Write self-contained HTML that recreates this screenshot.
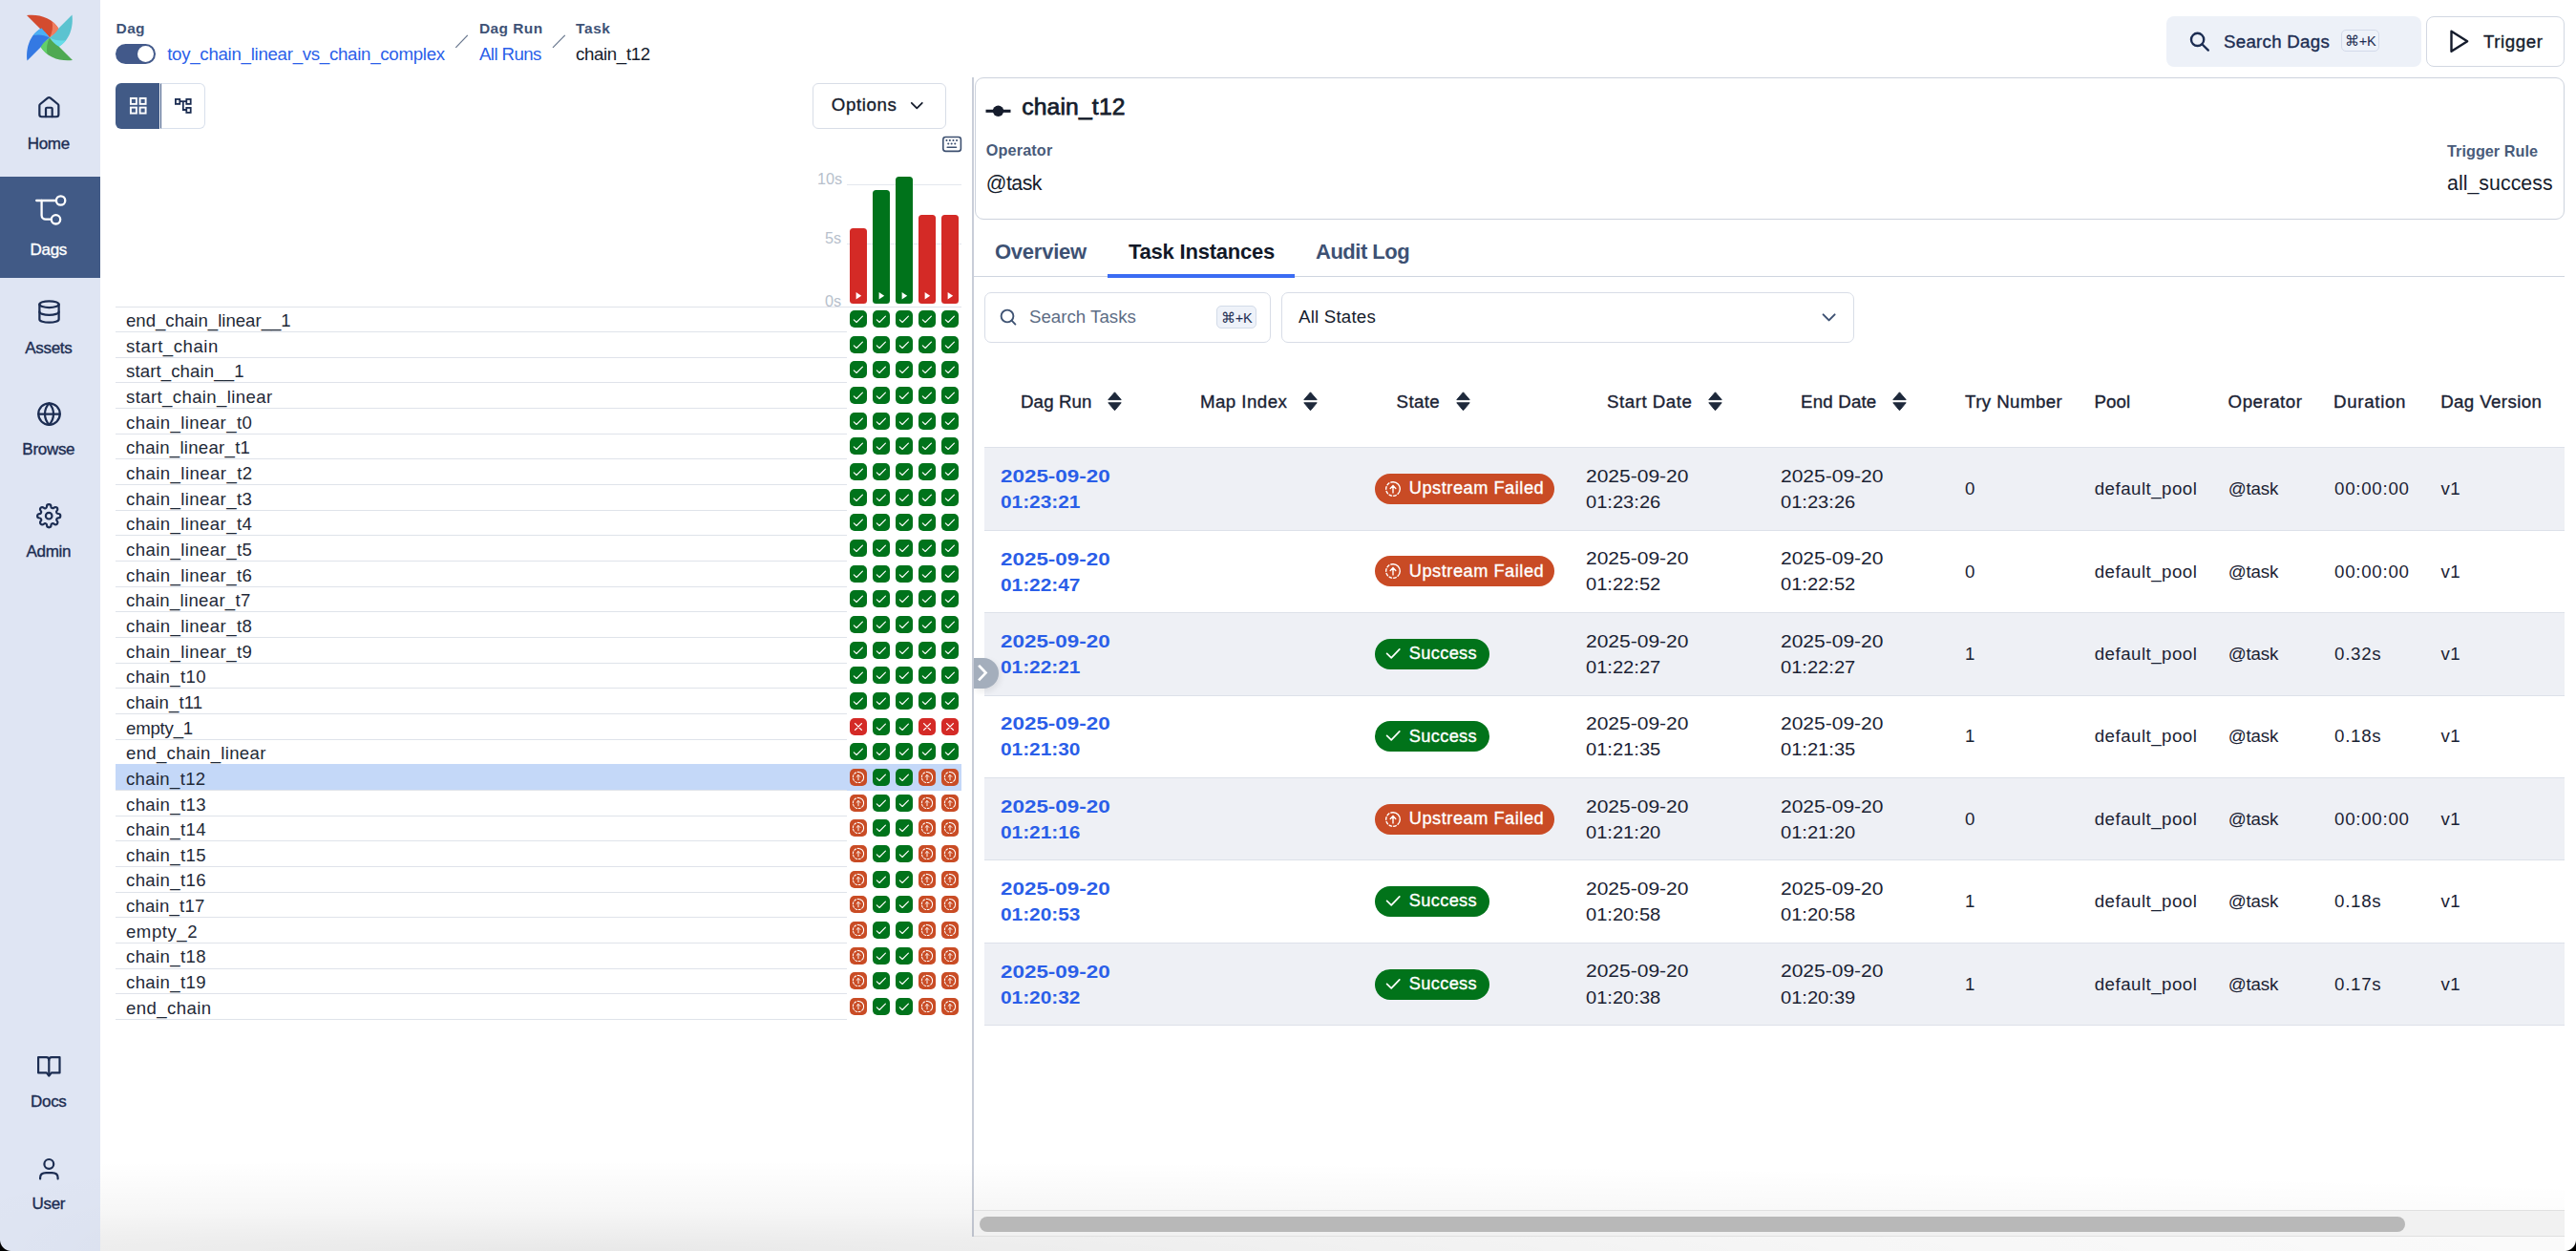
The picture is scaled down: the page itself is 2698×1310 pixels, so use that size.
<!DOCTYPE html>
<html><head><meta charset="utf-8"><style>
*{box-sizing:border-box;margin:0;padding:0}
html,body{width:2698px;height:1310px;overflow:hidden;background:#fff;font-family:"Liberation Sans",sans-serif;color:#101828}
.a{position:absolute}
.t{position:absolute;line-height:1;white-space:nowrap}
.m{-webkit-text-stroke:0.35px currentColor}
svg{position:absolute;overflow:visible}
</style></head><body>
<div class="a" style="left:0px;top:0px;width:105px;height:1310px;background:#dfe5f3"></div>
<svg style="left:22px;top:10px" width="60" height="60" viewBox="0 0 60 60"><g transform="rotate(0 30 29.5)"><path d="M6,6 C18,4.5 33,8 40,21 L30,29.5 Q25,22.5 20,20 Z" fill="#d34b2f"/><path d="M32.5,12.3 C36,15 38.5,18 40,21 L30,29.5 C33,24 33.6,18 32.5,12.3 Z" fill="#ef7d5f"/></g><g transform="rotate(90 30 29.5)"><path d="M6,6 C18,4.5 33,8 40,21 L30,29.5 Q25,22.5 20,20 Z" fill="#5bc3d0"/><path d="M32.5,12.3 C36,15 38.5,18 40,21 L30,29.5 C33,24 33.6,18 32.5,12.3 Z" fill="#66dde8"/></g><g transform="rotate(180 30 29.5)"><path d="M6,6 C18,4.5 33,8 40,21 L30,29.5 Q25,22.5 20,20 Z" fill="#4fa952"/><path d="M32.5,12.3 C36,15 38.5,18 40,21 L30,29.5 C33,24 33.6,18 32.5,12.3 Z" fill="#63d06a"/></g><g transform="rotate(270 30 29.5)"><path d="M6,6 C18,4.5 33,8 40,21 L30,29.5 Q25,22.5 20,20 Z" fill="#3479e3"/><path d="M32.5,12.3 C36,15 38.5,18 40,21 L30,29.5 C33,24 33.6,18 32.5,12.3 Z" fill="#4baff3"/></g></svg>
<svg style="left:38.2px;top:100.4px" width="26.7" height="25.4" viewBox="0 0 24 24" preserveAspectRatio="none" fill="none" stroke="#1c2d52" stroke-width="2" stroke-linecap="round" stroke-linejoin="round"><path d="M15 21v-8a1 1 0 0 0-1-1h-4a1 1 0 0 0-1 1v8"/><path d="M3 10a2 2 0 0 1 .709-1.528l7-5.999a2 2 0 0 1 2.582 0l7 5.999A2 2 0 0 1 21 10v9a2 2 0 0 1-2 2H5a2 2 0 0 1-2-2z"/></svg>
<div class="t m" style="left:-1.7px;width:105px;text-align:center;top:141.91px;font-size:17px;color:#1c2d52;letter-spacing:-0.3px">Home</div>
<div class="a" style="left:0px;top:185px;width:105px;height:106px;background:#415a86"></div>
<svg style="left:0;top:0" width="105" height="300" viewBox="0 0 105 300" fill="none" stroke="#fff" stroke-width="2.3" stroke-linecap="round"><path d="M38.2,210 H58.8"/><circle cx="63.6" cy="210" r="4.7"/><path d="M43.6,210 V225.5 a4.2,4.2 0 0 0 4.2,4.2 H53.8"/><circle cx="58.5" cy="229.8" r="4.7"/></svg>
<div class="t m" style="left:-1.7px;width:105px;text-align:center;top:253.41px;font-size:17px;color:#ffffff;letter-spacing:-0.3px">Dags</div>
<svg style="left:37.9px;top:312.6px" width="27" height="27" viewBox="0 0 24 24" fill="none" stroke="#1c2d52" stroke-width="2" stroke-linecap="round" stroke-linejoin="round"><ellipse cx="12" cy="5" rx="9" ry="3"/><path d="M3 5V19A9 3 0 0 0 21 19V5"/><path d="M3 12A9 3 0 0 0 21 12"/></svg>
<div class="t m" style="left:-1.7px;width:105px;text-align:center;top:355.61px;font-size:17px;color:#1c2d52;letter-spacing:-0.3px">Assets</div>
<svg style="left:37.8px;top:419.8px" width="27" height="27" viewBox="0 0 24 24" fill="none" stroke="#1c2d52" stroke-width="2" stroke-linecap="round" stroke-linejoin="round"><circle cx="12" cy="12" r="10"/><path d="M12 2a14.5 14.5 0 0 0 0 20 14.5 14.5 0 0 0 0-20"/><path d="M2 12h20"/></svg>
<div class="t m" style="left:-1.7px;width:105px;text-align:center;top:461.61px;font-size:17px;color:#1c2d52;letter-spacing:-0.3px">Browse</div>
<svg style="left:38.2px;top:527px" width="26.4" height="26.4" viewBox="0 0 24 24" fill="none" stroke="#1c2d52" stroke-width="2" stroke-linecap="round" stroke-linejoin="round"><circle cx="12" cy="12" r="3"/><path d="M19.4 15a1.65 1.65 0 0 0 .33 1.82l.06.06a2 2 0 0 1 0 2.83 2 2 0 0 1-2.83 0l-.06-.06a1.65 1.65 0 0 0-1.820-.33 1.65 1.65 0 0 0-1 1.51V21a2 2 0 0 1-2 2 2 2 0 0 1-2-2v-.09A1.65 1.65 0 0 0 9 19.4a1.650 1.65 0 0 0-1.82.33l-.06.06a2 2 0 0 1-2.83 0 2 2 0 0 1 0-2.83l.06-.06a1.65 1.65 0 0 0 .33-1.82 1.65 1.65 0 0 0-1.51-1H3a2 2 0 0 1-2-2 2 2 0 0 1 2-2h.09A1.65 1.65 0 0 0 4.6 9a1.65 1.65 0 0 0-.33-1.82l-.06-.06a2 2 0 0 1 0-2.83 2 2 0 0 1 2.83 0l.06.06a1.65 1.65 0 0 0 1.82.33H9a1.65 1.65 0 0 0 1-1.51V3a2 2 0 0 1 2-2 2 2 0 0 1 2 2v.09a1.65 1.65 0 0 0 1 1.51 1.65 1.65 0 0 0 1.82-.33l.06-.06a2 2 0 0 1 2.83 0 2 2 0 0 1 0 2.83l-.06.06a1.65 1.65 0 0 0-.33 1.82V9a1.65 1.65 0 0 0 1.51 1H21a2 2 0 0 1 2 2 2 2 0 0 1-2 2h-.09a1.65 1.65 0 0 0-1.51 1z"/></svg>
<div class="t m" style="left:-1.7px;width:105px;text-align:center;top:568.61px;font-size:17px;color:#1c2d52;letter-spacing:-0.3px">Admin</div>
<svg style="left:0;top:0" width="105" height="1310" viewBox="0 0 105 1310" fill="none" stroke="#1c2d52" stroke-width="2.2" stroke-linejoin="round" stroke-linecap="round"><path d="M51.3,1110 Q51.3,1107.1 54,1107.1 H62.5 V1123.4 H53.8 L51.3,1126.6 L48.8,1123.4 H40.1 V1107.1 H48.6 Q51.3,1107.1 51.3,1110 Z"/><path d="M51.3,1110 V1125.5"/><circle cx="51.3" cy="1218.9" r="4.9"/><path d="M42.1,1234.4 V1233.3 Q42.1,1228.1 48.2,1228.1 H54.5 Q60.6,1228.1 60.6,1233.3 V1234.4"/></svg>
<div class="t m" style="left:-1.7px;width:105px;text-align:center;top:1144.61px;font-size:17px;color:#1c2d52;letter-spacing:-0.3px">Docs</div>
<div class="t m" style="left:-1.7px;width:105px;text-align:center;top:1251.61px;font-size:17px;color:#1c2d52;letter-spacing:-0.3px">User</div>
<div class="t " style="left:121.60px;top:21.68px;font-size:15.5px;font-weight:700;color:#3e5276;letter-spacing:0.35px;">Dag</div>
<div class="a" style="left:121px;top:46px;width:42px;height:21px;background:#42598a;border-radius:11px"></div>
<div class="a" style="left:144px;top:48px;width:17px;height:17px;background:#fff;border-radius:50%"></div>
<div class="t " style="left:175.20px;top:48.47px;font-size:18.7px;font-weight:400;color:#2b5fe9;letter-spacing:-0.29px;">toy_chain_linear_vs_chain_complex</div>
<svg style="left:0;top:0" width="700" height="80" viewBox="0 0 700 80" stroke="#66758c" stroke-width="1.2"><path d="M477.3,49.8 L489.8,36.8"/><path d="M579,49.8 L591.8,36.8"/></svg>
<div class="t " style="left:502.00px;top:21.88px;font-size:15.5px;font-weight:700;color:#3e5276;letter-spacing:0.4px;">Dag Run</div>
<div class="t " style="left:502.00px;top:48.27px;font-size:18.7px;font-weight:400;color:#2b5fe9;letter-spacing:-0.6px;">All Runs</div>
<div class="t " style="left:603.00px;top:21.88px;font-size:15.5px;font-weight:700;color:#3e5276;letter-spacing:0.6px;">Task</div>
<div class="t " style="left:603.00px;top:48.27px;font-size:18.7px;font-weight:400;color:#151c2c;letter-spacing:-0.36px;">chain_t12</div>
<div class="a" style="left:2269px;top:17px;width:267px;height:53px;background:#edf1f8;border-radius:8px"></div>
<svg style="left:2292px;top:32px" width="24" height="24" viewBox="0 0 24 24" fill="none" stroke="#1c2d52" stroke-width="2.4" stroke-linecap="round"><circle cx="9.6" cy="9.4" r="6.6"/><path d="M14.6,14.5 L20.8,20.6"/></svg>
<div class="t m" style="left:2329.00px;top:34.87px;font-size:18.7px;font-weight:400;color:#1c2d52;letter-spacing:0.27px;">Search Dags</div>
<div class="a" style="left:2451.5px;top:31.3px;width:40.5px;height:23px;border:1px solid #d3daea;border-radius:5px;background:#eef2f9"></div>
<div class="t " style="left:2456.00px;top:36.23px;font-size:14.5px;font-weight:400;color:#1c2d52;letter-spacing:-0.2px;">&#8984;+K</div>
<div class="a" style="left:2541px;top:17px;width:145px;height:53px;border:1px solid #d2d8e2;border-radius:8px;background:#fff"></div>
<svg style="left:2560px;top:28px" width="32" height="32" viewBox="0 0 32 32" fill="none" stroke="#151c2c" stroke-width="2.4" stroke-linejoin="round"><path d="M7.5,4.8 L24.2,15.2 L7.5,25.8 Z"/></svg>
<div class="t m" style="left:2601.00px;top:34.87px;font-size:18.7px;font-weight:400;color:#151c2c;letter-spacing:0.58px;">Trigger</div>
<div class="a" style="left:121px;top:87px;width:46px;height:47.5px;background:#415a86;border-radius:6px 0 0 6px"></div>
<div class="a" style="left:168px;top:87px;width:46.7px;height:47.5px;border:1px solid #d9e0ec;border-left:1px solid #415a86;border-radius:0 6px 6px 0;background:#fff"></div>
<svg style="left:121px;top:87px" width="46" height="48" viewBox="0 0 46 48" fill="none" stroke="#fff" stroke-width="1.9"><rect x="15.9" y="15.9" width="6" height="6"/><rect x="25.6" y="15.9" width="6" height="6"/><rect x="15.9" y="25.6" width="6" height="6"/><rect x="25.6" y="25.6" width="6" height="6"/></svg>
<svg style="left:167px;top:87px" width="48" height="48" viewBox="0 0 48 48" fill="none" stroke="#1c2d52" stroke-width="1.8"><rect x="16.9" y="16.9" width="4.4" height="5"/><rect x="28.3" y="16.9" width="4.4" height="5"/><rect x="28.3" y="25.9" width="4.4" height="5"/><path d="M21.3,19.1 H28.3 M24.8,19.1 V28 H28.3"/></svg>
<div class="a" style="left:851px;top:87px;width:140px;height:47.6px;border:1px solid #d8dde7;border-radius:6px;background:#fff"></div>
<div class="t m" style="left:870.80px;top:101.07px;font-size:18.7px;font-weight:400;color:#151c2c;letter-spacing:0.6px;">Options</div>
<svg style="left:950px;top:100px" width="20" height="20" viewBox="0 0 20 20" fill="none" stroke="#151c2c" stroke-width="1.75" stroke-linecap="round" stroke-linejoin="round"><path d="M4.8,7.8 L10.3,13.3 L15.8,7.8"/></svg>
<svg style="left:980px;top:136px" width="32" height="28" viewBox="0 0 32 28" fill="none" stroke="#3d5070" stroke-width="1.6" stroke-linecap="round"><rect x="7.8" y="7.5" width="18.6" height="14.9" rx="2.6"/><path d="M11.4,11.1h.1 M14.8,11.1h.1 M18.4,11.1h.1 M22,11.1h.1 M13.2,14.5h.1 M16.6,14.5h.1 M20.2,14.5h.1" stroke-width="2"/><path d="M12.2,18.2 H21.5"/></svg>
<div class="t " style="left:856.00px;top:179.39px;font-size:16.2px;font-weight:400;color:#b7bfcc;letter-spacing:0px;">10s</div>
<div class="t " style="left:864.00px;top:240.59px;font-size:16.2px;font-weight:400;color:#b7bfcc;letter-spacing:0px;">5s</div>
<div class="t " style="left:864.00px;top:306.69px;font-size:16.2px;font-weight:400;color:#b7bfcc;letter-spacing:0px;">0s</div>
<div class="a" style="left:887px;top:193px;width:120px;height:1.2px;background:#e3e7ee"></div>
<div class="a" style="left:887px;top:255px;width:120px;height:1.2px;background:#e3e7ee"></div>
<div class="a" style="left:890px;top:239px;width:18px;height:79px;background:#d42a26;border-radius:3.5px"></div>
<svg style="left:890px;top:302px" width="18" height="16" viewBox="0 0 18 16" fill="#fff"><path d="M6.6,4 L12.2,7.8 L6.6,11.6 Z"/></svg>
<div class="a" style="left:914px;top:199px;width:18px;height:119px;background:#00731b;border-radius:3.5px"></div>
<svg style="left:914px;top:302px" width="18" height="16" viewBox="0 0 18 16" fill="#fff"><path d="M6.6,4 L12.2,7.8 L6.6,11.6 Z"/></svg>
<div class="a" style="left:938px;top:185px;width:18px;height:133px;background:#00731b;border-radius:3.5px"></div>
<svg style="left:938px;top:302px" width="18" height="16" viewBox="0 0 18 16" fill="#fff"><path d="M6.6,4 L12.2,7.8 L6.6,11.6 Z"/></svg>
<div class="a" style="left:962px;top:225px;width:18px;height:93px;background:#d42a26;border-radius:3.5px"></div>
<svg style="left:962px;top:302px" width="18" height="16" viewBox="0 0 18 16" fill="#fff"><path d="M6.6,4 L12.2,7.8 L6.6,11.6 Z"/></svg>
<div class="a" style="left:986px;top:225px;width:18px;height:93px;background:#d42a26;border-radius:3.5px"></div>
<svg style="left:986px;top:302px" width="18" height="16" viewBox="0 0 18 16" fill="#fff"><path d="M6.6,4 L12.2,7.8 L6.6,11.6 Z"/></svg>
<div class="a" style="left:121px;top:321px;width:886px;height:1px;background:#dfe3ea"></div>
<div class="a" style="left:121px;top:347px;width:766px;height:1px;background:#dfe3ea"></div>
<div class="t " style="left:132.00px;top:326.96px;font-size:18.6px;font-weight:400;color:#1f2937;letter-spacing:0.0px;">end_chain_linear__1</div>
<div class="a" style="left:890px;top:325.10px;width:18px;height:18px;border-radius:5px;background:#00731b"></div><svg style="left:890px;top:325.10px" width="18" height="18" viewBox="0 0 18 18" fill="none" stroke="#fff" stroke-width="1.15" stroke-linecap="round" stroke-linejoin="round"><path d="M4.3,9.9 L7.1,12.5 L13.4,6.1"/></svg>
<div class="a" style="left:914px;top:325.10px;width:18px;height:18px;border-radius:5px;background:#00731b"></div><svg style="left:914px;top:325.10px" width="18" height="18" viewBox="0 0 18 18" fill="none" stroke="#fff" stroke-width="1.15" stroke-linecap="round" stroke-linejoin="round"><path d="M4.3,9.9 L7.1,12.5 L13.4,6.1"/></svg>
<div class="a" style="left:938px;top:325.10px;width:18px;height:18px;border-radius:5px;background:#00731b"></div><svg style="left:938px;top:325.10px" width="18" height="18" viewBox="0 0 18 18" fill="none" stroke="#fff" stroke-width="1.15" stroke-linecap="round" stroke-linejoin="round"><path d="M4.3,9.9 L7.1,12.5 L13.4,6.1"/></svg>
<div class="a" style="left:962px;top:325.10px;width:18px;height:18px;border-radius:5px;background:#00731b"></div><svg style="left:962px;top:325.10px" width="18" height="18" viewBox="0 0 18 18" fill="none" stroke="#fff" stroke-width="1.15" stroke-linecap="round" stroke-linejoin="round"><path d="M4.3,9.9 L7.1,12.5 L13.4,6.1"/></svg>
<div class="a" style="left:986px;top:325.10px;width:18px;height:18px;border-radius:5px;background:#00731b"></div><svg style="left:986px;top:325.10px" width="18" height="18" viewBox="0 0 18 18" fill="none" stroke="#fff" stroke-width="1.15" stroke-linecap="round" stroke-linejoin="round"><path d="M4.3,9.9 L7.1,12.5 L13.4,6.1"/></svg>
<div class="a" style="left:121px;top:374px;width:766px;height:1px;background:#dfe3ea"></div>
<div class="t " style="left:132.00px;top:353.62px;font-size:18.6px;font-weight:400;color:#1f2937;letter-spacing:0.54px;">start_chain</div>
<div class="a" style="left:890px;top:351.76px;width:18px;height:18px;border-radius:5px;background:#00731b"></div><svg style="left:890px;top:351.76px" width="18" height="18" viewBox="0 0 18 18" fill="none" stroke="#fff" stroke-width="1.15" stroke-linecap="round" stroke-linejoin="round"><path d="M4.3,9.9 L7.1,12.5 L13.4,6.1"/></svg>
<div class="a" style="left:914px;top:351.76px;width:18px;height:18px;border-radius:5px;background:#00731b"></div><svg style="left:914px;top:351.76px" width="18" height="18" viewBox="0 0 18 18" fill="none" stroke="#fff" stroke-width="1.15" stroke-linecap="round" stroke-linejoin="round"><path d="M4.3,9.9 L7.1,12.5 L13.4,6.1"/></svg>
<div class="a" style="left:938px;top:351.76px;width:18px;height:18px;border-radius:5px;background:#00731b"></div><svg style="left:938px;top:351.76px" width="18" height="18" viewBox="0 0 18 18" fill="none" stroke="#fff" stroke-width="1.15" stroke-linecap="round" stroke-linejoin="round"><path d="M4.3,9.9 L7.1,12.5 L13.4,6.1"/></svg>
<div class="a" style="left:962px;top:351.76px;width:18px;height:18px;border-radius:5px;background:#00731b"></div><svg style="left:962px;top:351.76px" width="18" height="18" viewBox="0 0 18 18" fill="none" stroke="#fff" stroke-width="1.15" stroke-linecap="round" stroke-linejoin="round"><path d="M4.3,9.9 L7.1,12.5 L13.4,6.1"/></svg>
<div class="a" style="left:986px;top:351.76px;width:18px;height:18px;border-radius:5px;background:#00731b"></div><svg style="left:986px;top:351.76px" width="18" height="18" viewBox="0 0 18 18" fill="none" stroke="#fff" stroke-width="1.15" stroke-linecap="round" stroke-linejoin="round"><path d="M4.3,9.9 L7.1,12.5 L13.4,6.1"/></svg>
<div class="a" style="left:121px;top:400px;width:766px;height:1px;background:#dfe3ea"></div>
<div class="t " style="left:132.00px;top:380.28px;font-size:18.6px;font-weight:400;color:#1f2937;letter-spacing:0.115px;">start_chain__1</div>
<div class="a" style="left:890px;top:378.42px;width:18px;height:18px;border-radius:5px;background:#00731b"></div><svg style="left:890px;top:378.42px" width="18" height="18" viewBox="0 0 18 18" fill="none" stroke="#fff" stroke-width="1.15" stroke-linecap="round" stroke-linejoin="round"><path d="M4.3,9.9 L7.1,12.5 L13.4,6.1"/></svg>
<div class="a" style="left:914px;top:378.42px;width:18px;height:18px;border-radius:5px;background:#00731b"></div><svg style="left:914px;top:378.42px" width="18" height="18" viewBox="0 0 18 18" fill="none" stroke="#fff" stroke-width="1.15" stroke-linecap="round" stroke-linejoin="round"><path d="M4.3,9.9 L7.1,12.5 L13.4,6.1"/></svg>
<div class="a" style="left:938px;top:378.42px;width:18px;height:18px;border-radius:5px;background:#00731b"></div><svg style="left:938px;top:378.42px" width="18" height="18" viewBox="0 0 18 18" fill="none" stroke="#fff" stroke-width="1.15" stroke-linecap="round" stroke-linejoin="round"><path d="M4.3,9.9 L7.1,12.5 L13.4,6.1"/></svg>
<div class="a" style="left:962px;top:378.42px;width:18px;height:18px;border-radius:5px;background:#00731b"></div><svg style="left:962px;top:378.42px" width="18" height="18" viewBox="0 0 18 18" fill="none" stroke="#fff" stroke-width="1.15" stroke-linecap="round" stroke-linejoin="round"><path d="M4.3,9.9 L7.1,12.5 L13.4,6.1"/></svg>
<div class="a" style="left:986px;top:378.42px;width:18px;height:18px;border-radius:5px;background:#00731b"></div><svg style="left:986px;top:378.42px" width="18" height="18" viewBox="0 0 18 18" fill="none" stroke="#fff" stroke-width="1.15" stroke-linecap="round" stroke-linejoin="round"><path d="M4.3,9.9 L7.1,12.5 L13.4,6.1"/></svg>
<div class="a" style="left:121px;top:427px;width:766px;height:1px;background:#dfe3ea"></div>
<div class="t " style="left:132.00px;top:406.94px;font-size:18.6px;font-weight:400;color:#1f2937;letter-spacing:0.376px;">start_chain_linear</div>
<div class="a" style="left:890px;top:405.08px;width:18px;height:18px;border-radius:5px;background:#00731b"></div><svg style="left:890px;top:405.08px" width="18" height="18" viewBox="0 0 18 18" fill="none" stroke="#fff" stroke-width="1.15" stroke-linecap="round" stroke-linejoin="round"><path d="M4.3,9.9 L7.1,12.5 L13.4,6.1"/></svg>
<div class="a" style="left:914px;top:405.08px;width:18px;height:18px;border-radius:5px;background:#00731b"></div><svg style="left:914px;top:405.08px" width="18" height="18" viewBox="0 0 18 18" fill="none" stroke="#fff" stroke-width="1.15" stroke-linecap="round" stroke-linejoin="round"><path d="M4.3,9.9 L7.1,12.5 L13.4,6.1"/></svg>
<div class="a" style="left:938px;top:405.08px;width:18px;height:18px;border-radius:5px;background:#00731b"></div><svg style="left:938px;top:405.08px" width="18" height="18" viewBox="0 0 18 18" fill="none" stroke="#fff" stroke-width="1.15" stroke-linecap="round" stroke-linejoin="round"><path d="M4.3,9.9 L7.1,12.5 L13.4,6.1"/></svg>
<div class="a" style="left:962px;top:405.08px;width:18px;height:18px;border-radius:5px;background:#00731b"></div><svg style="left:962px;top:405.08px" width="18" height="18" viewBox="0 0 18 18" fill="none" stroke="#fff" stroke-width="1.15" stroke-linecap="round" stroke-linejoin="round"><path d="M4.3,9.9 L7.1,12.5 L13.4,6.1"/></svg>
<div class="a" style="left:986px;top:405.08px;width:18px;height:18px;border-radius:5px;background:#00731b"></div><svg style="left:986px;top:405.08px" width="18" height="18" viewBox="0 0 18 18" fill="none" stroke="#fff" stroke-width="1.15" stroke-linecap="round" stroke-linejoin="round"><path d="M4.3,9.9 L7.1,12.5 L13.4,6.1"/></svg>
<div class="a" style="left:121px;top:454px;width:766px;height:1px;background:#dfe3ea"></div>
<div class="t " style="left:132.00px;top:433.60px;font-size:18.6px;font-weight:400;color:#1f2937;letter-spacing:0.407px;">chain_linear_t0</div>
<div class="a" style="left:890px;top:431.74px;width:18px;height:18px;border-radius:5px;background:#00731b"></div><svg style="left:890px;top:431.74px" width="18" height="18" viewBox="0 0 18 18" fill="none" stroke="#fff" stroke-width="1.15" stroke-linecap="round" stroke-linejoin="round"><path d="M4.3,9.9 L7.1,12.5 L13.4,6.1"/></svg>
<div class="a" style="left:914px;top:431.74px;width:18px;height:18px;border-radius:5px;background:#00731b"></div><svg style="left:914px;top:431.74px" width="18" height="18" viewBox="0 0 18 18" fill="none" stroke="#fff" stroke-width="1.15" stroke-linecap="round" stroke-linejoin="round"><path d="M4.3,9.9 L7.1,12.5 L13.4,6.1"/></svg>
<div class="a" style="left:938px;top:431.74px;width:18px;height:18px;border-radius:5px;background:#00731b"></div><svg style="left:938px;top:431.74px" width="18" height="18" viewBox="0 0 18 18" fill="none" stroke="#fff" stroke-width="1.15" stroke-linecap="round" stroke-linejoin="round"><path d="M4.3,9.9 L7.1,12.5 L13.4,6.1"/></svg>
<div class="a" style="left:962px;top:431.74px;width:18px;height:18px;border-radius:5px;background:#00731b"></div><svg style="left:962px;top:431.74px" width="18" height="18" viewBox="0 0 18 18" fill="none" stroke="#fff" stroke-width="1.15" stroke-linecap="round" stroke-linejoin="round"><path d="M4.3,9.9 L7.1,12.5 L13.4,6.1"/></svg>
<div class="a" style="left:986px;top:431.74px;width:18px;height:18px;border-radius:5px;background:#00731b"></div><svg style="left:986px;top:431.74px" width="18" height="18" viewBox="0 0 18 18" fill="none" stroke="#fff" stroke-width="1.15" stroke-linecap="round" stroke-linejoin="round"><path d="M4.3,9.9 L7.1,12.5 L13.4,6.1"/></svg>
<div class="a" style="left:121px;top:480px;width:766px;height:1px;background:#dfe3ea"></div>
<div class="t " style="left:132.00px;top:460.26px;font-size:18.6px;font-weight:400;color:#1f2937;letter-spacing:0.271px;">chain_linear_t1</div>
<div class="a" style="left:890px;top:458.40px;width:18px;height:18px;border-radius:5px;background:#00731b"></div><svg style="left:890px;top:458.40px" width="18" height="18" viewBox="0 0 18 18" fill="none" stroke="#fff" stroke-width="1.15" stroke-linecap="round" stroke-linejoin="round"><path d="M4.3,9.9 L7.1,12.5 L13.4,6.1"/></svg>
<div class="a" style="left:914px;top:458.40px;width:18px;height:18px;border-radius:5px;background:#00731b"></div><svg style="left:914px;top:458.40px" width="18" height="18" viewBox="0 0 18 18" fill="none" stroke="#fff" stroke-width="1.15" stroke-linecap="round" stroke-linejoin="round"><path d="M4.3,9.9 L7.1,12.5 L13.4,6.1"/></svg>
<div class="a" style="left:938px;top:458.40px;width:18px;height:18px;border-radius:5px;background:#00731b"></div><svg style="left:938px;top:458.40px" width="18" height="18" viewBox="0 0 18 18" fill="none" stroke="#fff" stroke-width="1.15" stroke-linecap="round" stroke-linejoin="round"><path d="M4.3,9.9 L7.1,12.5 L13.4,6.1"/></svg>
<div class="a" style="left:962px;top:458.40px;width:18px;height:18px;border-radius:5px;background:#00731b"></div><svg style="left:962px;top:458.40px" width="18" height="18" viewBox="0 0 18 18" fill="none" stroke="#fff" stroke-width="1.15" stroke-linecap="round" stroke-linejoin="round"><path d="M4.3,9.9 L7.1,12.5 L13.4,6.1"/></svg>
<div class="a" style="left:986px;top:458.40px;width:18px;height:18px;border-radius:5px;background:#00731b"></div><svg style="left:986px;top:458.40px" width="18" height="18" viewBox="0 0 18 18" fill="none" stroke="#fff" stroke-width="1.15" stroke-linecap="round" stroke-linejoin="round"><path d="M4.3,9.9 L7.1,12.5 L13.4,6.1"/></svg>
<div class="a" style="left:121px;top:507px;width:766px;height:1px;background:#dfe3ea"></div>
<div class="t " style="left:132.00px;top:486.92px;font-size:18.6px;font-weight:400;color:#1f2937;letter-spacing:0.429px;">chain_linear_t2</div>
<div class="a" style="left:890px;top:485.06px;width:18px;height:18px;border-radius:5px;background:#00731b"></div><svg style="left:890px;top:485.06px" width="18" height="18" viewBox="0 0 18 18" fill="none" stroke="#fff" stroke-width="1.15" stroke-linecap="round" stroke-linejoin="round"><path d="M4.3,9.9 L7.1,12.5 L13.4,6.1"/></svg>
<div class="a" style="left:914px;top:485.06px;width:18px;height:18px;border-radius:5px;background:#00731b"></div><svg style="left:914px;top:485.06px" width="18" height="18" viewBox="0 0 18 18" fill="none" stroke="#fff" stroke-width="1.15" stroke-linecap="round" stroke-linejoin="round"><path d="M4.3,9.9 L7.1,12.5 L13.4,6.1"/></svg>
<div class="a" style="left:938px;top:485.06px;width:18px;height:18px;border-radius:5px;background:#00731b"></div><svg style="left:938px;top:485.06px" width="18" height="18" viewBox="0 0 18 18" fill="none" stroke="#fff" stroke-width="1.15" stroke-linecap="round" stroke-linejoin="round"><path d="M4.3,9.9 L7.1,12.5 L13.4,6.1"/></svg>
<div class="a" style="left:962px;top:485.06px;width:18px;height:18px;border-radius:5px;background:#00731b"></div><svg style="left:962px;top:485.06px" width="18" height="18" viewBox="0 0 18 18" fill="none" stroke="#fff" stroke-width="1.15" stroke-linecap="round" stroke-linejoin="round"><path d="M4.3,9.9 L7.1,12.5 L13.4,6.1"/></svg>
<div class="a" style="left:986px;top:485.06px;width:18px;height:18px;border-radius:5px;background:#00731b"></div><svg style="left:986px;top:485.06px" width="18" height="18" viewBox="0 0 18 18" fill="none" stroke="#fff" stroke-width="1.15" stroke-linecap="round" stroke-linejoin="round"><path d="M4.3,9.9 L7.1,12.5 L13.4,6.1"/></svg>
<div class="a" style="left:121px;top:534px;width:766px;height:1px;background:#dfe3ea"></div>
<div class="t " style="left:132.00px;top:513.58px;font-size:18.6px;font-weight:400;color:#1f2937;letter-spacing:0.41px;">chain_linear_t3</div>
<div class="a" style="left:890px;top:511.72px;width:18px;height:18px;border-radius:5px;background:#00731b"></div><svg style="left:890px;top:511.72px" width="18" height="18" viewBox="0 0 18 18" fill="none" stroke="#fff" stroke-width="1.15" stroke-linecap="round" stroke-linejoin="round"><path d="M4.3,9.9 L7.1,12.5 L13.4,6.1"/></svg>
<div class="a" style="left:914px;top:511.72px;width:18px;height:18px;border-radius:5px;background:#00731b"></div><svg style="left:914px;top:511.72px" width="18" height="18" viewBox="0 0 18 18" fill="none" stroke="#fff" stroke-width="1.15" stroke-linecap="round" stroke-linejoin="round"><path d="M4.3,9.9 L7.1,12.5 L13.4,6.1"/></svg>
<div class="a" style="left:938px;top:511.72px;width:18px;height:18px;border-radius:5px;background:#00731b"></div><svg style="left:938px;top:511.72px" width="18" height="18" viewBox="0 0 18 18" fill="none" stroke="#fff" stroke-width="1.15" stroke-linecap="round" stroke-linejoin="round"><path d="M4.3,9.9 L7.1,12.5 L13.4,6.1"/></svg>
<div class="a" style="left:962px;top:511.72px;width:18px;height:18px;border-radius:5px;background:#00731b"></div><svg style="left:962px;top:511.72px" width="18" height="18" viewBox="0 0 18 18" fill="none" stroke="#fff" stroke-width="1.15" stroke-linecap="round" stroke-linejoin="round"><path d="M4.3,9.9 L7.1,12.5 L13.4,6.1"/></svg>
<div class="a" style="left:986px;top:511.72px;width:18px;height:18px;border-radius:5px;background:#00731b"></div><svg style="left:986px;top:511.72px" width="18" height="18" viewBox="0 0 18 18" fill="none" stroke="#fff" stroke-width="1.15" stroke-linecap="round" stroke-linejoin="round"><path d="M4.3,9.9 L7.1,12.5 L13.4,6.1"/></svg>
<div class="a" style="left:121px;top:560px;width:766px;height:1px;background:#dfe3ea"></div>
<div class="t " style="left:132.00px;top:540.24px;font-size:18.6px;font-weight:400;color:#1f2937;letter-spacing:0.41px;">chain_linear_t4</div>
<div class="a" style="left:890px;top:538.38px;width:18px;height:18px;border-radius:5px;background:#00731b"></div><svg style="left:890px;top:538.38px" width="18" height="18" viewBox="0 0 18 18" fill="none" stroke="#fff" stroke-width="1.15" stroke-linecap="round" stroke-linejoin="round"><path d="M4.3,9.9 L7.1,12.5 L13.4,6.1"/></svg>
<div class="a" style="left:914px;top:538.38px;width:18px;height:18px;border-radius:5px;background:#00731b"></div><svg style="left:914px;top:538.38px" width="18" height="18" viewBox="0 0 18 18" fill="none" stroke="#fff" stroke-width="1.15" stroke-linecap="round" stroke-linejoin="round"><path d="M4.3,9.9 L7.1,12.5 L13.4,6.1"/></svg>
<div class="a" style="left:938px;top:538.38px;width:18px;height:18px;border-radius:5px;background:#00731b"></div><svg style="left:938px;top:538.38px" width="18" height="18" viewBox="0 0 18 18" fill="none" stroke="#fff" stroke-width="1.15" stroke-linecap="round" stroke-linejoin="round"><path d="M4.3,9.9 L7.1,12.5 L13.4,6.1"/></svg>
<div class="a" style="left:962px;top:538.38px;width:18px;height:18px;border-radius:5px;background:#00731b"></div><svg style="left:962px;top:538.38px" width="18" height="18" viewBox="0 0 18 18" fill="none" stroke="#fff" stroke-width="1.15" stroke-linecap="round" stroke-linejoin="round"><path d="M4.3,9.9 L7.1,12.5 L13.4,6.1"/></svg>
<div class="a" style="left:986px;top:538.38px;width:18px;height:18px;border-radius:5px;background:#00731b"></div><svg style="left:986px;top:538.38px" width="18" height="18" viewBox="0 0 18 18" fill="none" stroke="#fff" stroke-width="1.15" stroke-linecap="round" stroke-linejoin="round"><path d="M4.3,9.9 L7.1,12.5 L13.4,6.1"/></svg>
<div class="a" style="left:121px;top:587px;width:766px;height:1px;background:#dfe3ea"></div>
<div class="t " style="left:132.00px;top:566.90px;font-size:18.6px;font-weight:400;color:#1f2937;letter-spacing:0.41px;">chain_linear_t5</div>
<div class="a" style="left:890px;top:565.04px;width:18px;height:18px;border-radius:5px;background:#00731b"></div><svg style="left:890px;top:565.04px" width="18" height="18" viewBox="0 0 18 18" fill="none" stroke="#fff" stroke-width="1.15" stroke-linecap="round" stroke-linejoin="round"><path d="M4.3,9.9 L7.1,12.5 L13.4,6.1"/></svg>
<div class="a" style="left:914px;top:565.04px;width:18px;height:18px;border-radius:5px;background:#00731b"></div><svg style="left:914px;top:565.04px" width="18" height="18" viewBox="0 0 18 18" fill="none" stroke="#fff" stroke-width="1.15" stroke-linecap="round" stroke-linejoin="round"><path d="M4.3,9.9 L7.1,12.5 L13.4,6.1"/></svg>
<div class="a" style="left:938px;top:565.04px;width:18px;height:18px;border-radius:5px;background:#00731b"></div><svg style="left:938px;top:565.04px" width="18" height="18" viewBox="0 0 18 18" fill="none" stroke="#fff" stroke-width="1.15" stroke-linecap="round" stroke-linejoin="round"><path d="M4.3,9.9 L7.1,12.5 L13.4,6.1"/></svg>
<div class="a" style="left:962px;top:565.04px;width:18px;height:18px;border-radius:5px;background:#00731b"></div><svg style="left:962px;top:565.04px" width="18" height="18" viewBox="0 0 18 18" fill="none" stroke="#fff" stroke-width="1.15" stroke-linecap="round" stroke-linejoin="round"><path d="M4.3,9.9 L7.1,12.5 L13.4,6.1"/></svg>
<div class="a" style="left:986px;top:565.04px;width:18px;height:18px;border-radius:5px;background:#00731b"></div><svg style="left:986px;top:565.04px" width="18" height="18" viewBox="0 0 18 18" fill="none" stroke="#fff" stroke-width="1.15" stroke-linecap="round" stroke-linejoin="round"><path d="M4.3,9.9 L7.1,12.5 L13.4,6.1"/></svg>
<div class="a" style="left:121px;top:614px;width:766px;height:1px;background:#dfe3ea"></div>
<div class="t " style="left:132.00px;top:593.56px;font-size:18.6px;font-weight:400;color:#1f2937;letter-spacing:0.41px;">chain_linear_t6</div>
<div class="a" style="left:890px;top:591.70px;width:18px;height:18px;border-radius:5px;background:#00731b"></div><svg style="left:890px;top:591.70px" width="18" height="18" viewBox="0 0 18 18" fill="none" stroke="#fff" stroke-width="1.15" stroke-linecap="round" stroke-linejoin="round"><path d="M4.3,9.9 L7.1,12.5 L13.4,6.1"/></svg>
<div class="a" style="left:914px;top:591.70px;width:18px;height:18px;border-radius:5px;background:#00731b"></div><svg style="left:914px;top:591.70px" width="18" height="18" viewBox="0 0 18 18" fill="none" stroke="#fff" stroke-width="1.15" stroke-linecap="round" stroke-linejoin="round"><path d="M4.3,9.9 L7.1,12.5 L13.4,6.1"/></svg>
<div class="a" style="left:938px;top:591.70px;width:18px;height:18px;border-radius:5px;background:#00731b"></div><svg style="left:938px;top:591.70px" width="18" height="18" viewBox="0 0 18 18" fill="none" stroke="#fff" stroke-width="1.15" stroke-linecap="round" stroke-linejoin="round"><path d="M4.3,9.9 L7.1,12.5 L13.4,6.1"/></svg>
<div class="a" style="left:962px;top:591.70px;width:18px;height:18px;border-radius:5px;background:#00731b"></div><svg style="left:962px;top:591.70px" width="18" height="18" viewBox="0 0 18 18" fill="none" stroke="#fff" stroke-width="1.15" stroke-linecap="round" stroke-linejoin="round"><path d="M4.3,9.9 L7.1,12.5 L13.4,6.1"/></svg>
<div class="a" style="left:986px;top:591.70px;width:18px;height:18px;border-radius:5px;background:#00731b"></div><svg style="left:986px;top:591.70px" width="18" height="18" viewBox="0 0 18 18" fill="none" stroke="#fff" stroke-width="1.15" stroke-linecap="round" stroke-linejoin="round"><path d="M4.3,9.9 L7.1,12.5 L13.4,6.1"/></svg>
<div class="a" style="left:121px;top:640px;width:766px;height:1px;background:#dfe3ea"></div>
<div class="t " style="left:132.00px;top:620.22px;font-size:18.6px;font-weight:400;color:#1f2937;letter-spacing:0.3px;">chain_linear_t7</div>
<div class="a" style="left:890px;top:618.36px;width:18px;height:18px;border-radius:5px;background:#00731b"></div><svg style="left:890px;top:618.36px" width="18" height="18" viewBox="0 0 18 18" fill="none" stroke="#fff" stroke-width="1.15" stroke-linecap="round" stroke-linejoin="round"><path d="M4.3,9.9 L7.1,12.5 L13.4,6.1"/></svg>
<div class="a" style="left:914px;top:618.36px;width:18px;height:18px;border-radius:5px;background:#00731b"></div><svg style="left:914px;top:618.36px" width="18" height="18" viewBox="0 0 18 18" fill="none" stroke="#fff" stroke-width="1.15" stroke-linecap="round" stroke-linejoin="round"><path d="M4.3,9.9 L7.1,12.5 L13.4,6.1"/></svg>
<div class="a" style="left:938px;top:618.36px;width:18px;height:18px;border-radius:5px;background:#00731b"></div><svg style="left:938px;top:618.36px" width="18" height="18" viewBox="0 0 18 18" fill="none" stroke="#fff" stroke-width="1.15" stroke-linecap="round" stroke-linejoin="round"><path d="M4.3,9.9 L7.1,12.5 L13.4,6.1"/></svg>
<div class="a" style="left:962px;top:618.36px;width:18px;height:18px;border-radius:5px;background:#00731b"></div><svg style="left:962px;top:618.36px" width="18" height="18" viewBox="0 0 18 18" fill="none" stroke="#fff" stroke-width="1.15" stroke-linecap="round" stroke-linejoin="round"><path d="M4.3,9.9 L7.1,12.5 L13.4,6.1"/></svg>
<div class="a" style="left:986px;top:618.36px;width:18px;height:18px;border-radius:5px;background:#00731b"></div><svg style="left:986px;top:618.36px" width="18" height="18" viewBox="0 0 18 18" fill="none" stroke="#fff" stroke-width="1.15" stroke-linecap="round" stroke-linejoin="round"><path d="M4.3,9.9 L7.1,12.5 L13.4,6.1"/></svg>
<div class="a" style="left:121px;top:667px;width:766px;height:1px;background:#dfe3ea"></div>
<div class="t " style="left:132.00px;top:646.88px;font-size:18.6px;font-weight:400;color:#1f2937;letter-spacing:0.41px;">chain_linear_t8</div>
<div class="a" style="left:890px;top:645.02px;width:18px;height:18px;border-radius:5px;background:#00731b"></div><svg style="left:890px;top:645.02px" width="18" height="18" viewBox="0 0 18 18" fill="none" stroke="#fff" stroke-width="1.15" stroke-linecap="round" stroke-linejoin="round"><path d="M4.3,9.9 L7.1,12.5 L13.4,6.1"/></svg>
<div class="a" style="left:914px;top:645.02px;width:18px;height:18px;border-radius:5px;background:#00731b"></div><svg style="left:914px;top:645.02px" width="18" height="18" viewBox="0 0 18 18" fill="none" stroke="#fff" stroke-width="1.15" stroke-linecap="round" stroke-linejoin="round"><path d="M4.3,9.9 L7.1,12.5 L13.4,6.1"/></svg>
<div class="a" style="left:938px;top:645.02px;width:18px;height:18px;border-radius:5px;background:#00731b"></div><svg style="left:938px;top:645.02px" width="18" height="18" viewBox="0 0 18 18" fill="none" stroke="#fff" stroke-width="1.15" stroke-linecap="round" stroke-linejoin="round"><path d="M4.3,9.9 L7.1,12.5 L13.4,6.1"/></svg>
<div class="a" style="left:962px;top:645.02px;width:18px;height:18px;border-radius:5px;background:#00731b"></div><svg style="left:962px;top:645.02px" width="18" height="18" viewBox="0 0 18 18" fill="none" stroke="#fff" stroke-width="1.15" stroke-linecap="round" stroke-linejoin="round"><path d="M4.3,9.9 L7.1,12.5 L13.4,6.1"/></svg>
<div class="a" style="left:986px;top:645.02px;width:18px;height:18px;border-radius:5px;background:#00731b"></div><svg style="left:986px;top:645.02px" width="18" height="18" viewBox="0 0 18 18" fill="none" stroke="#fff" stroke-width="1.15" stroke-linecap="round" stroke-linejoin="round"><path d="M4.3,9.9 L7.1,12.5 L13.4,6.1"/></svg>
<div class="a" style="left:121px;top:694px;width:766px;height:1px;background:#dfe3ea"></div>
<div class="t " style="left:132.00px;top:673.54px;font-size:18.6px;font-weight:400;color:#1f2937;letter-spacing:0.41px;">chain_linear_t9</div>
<div class="a" style="left:890px;top:671.68px;width:18px;height:18px;border-radius:5px;background:#00731b"></div><svg style="left:890px;top:671.68px" width="18" height="18" viewBox="0 0 18 18" fill="none" stroke="#fff" stroke-width="1.15" stroke-linecap="round" stroke-linejoin="round"><path d="M4.3,9.9 L7.1,12.5 L13.4,6.1"/></svg>
<div class="a" style="left:914px;top:671.68px;width:18px;height:18px;border-radius:5px;background:#00731b"></div><svg style="left:914px;top:671.68px" width="18" height="18" viewBox="0 0 18 18" fill="none" stroke="#fff" stroke-width="1.15" stroke-linecap="round" stroke-linejoin="round"><path d="M4.3,9.9 L7.1,12.5 L13.4,6.1"/></svg>
<div class="a" style="left:938px;top:671.68px;width:18px;height:18px;border-radius:5px;background:#00731b"></div><svg style="left:938px;top:671.68px" width="18" height="18" viewBox="0 0 18 18" fill="none" stroke="#fff" stroke-width="1.15" stroke-linecap="round" stroke-linejoin="round"><path d="M4.3,9.9 L7.1,12.5 L13.4,6.1"/></svg>
<div class="a" style="left:962px;top:671.68px;width:18px;height:18px;border-radius:5px;background:#00731b"></div><svg style="left:962px;top:671.68px" width="18" height="18" viewBox="0 0 18 18" fill="none" stroke="#fff" stroke-width="1.15" stroke-linecap="round" stroke-linejoin="round"><path d="M4.3,9.9 L7.1,12.5 L13.4,6.1"/></svg>
<div class="a" style="left:986px;top:671.68px;width:18px;height:18px;border-radius:5px;background:#00731b"></div><svg style="left:986px;top:671.68px" width="18" height="18" viewBox="0 0 18 18" fill="none" stroke="#fff" stroke-width="1.15" stroke-linecap="round" stroke-linejoin="round"><path d="M4.3,9.9 L7.1,12.5 L13.4,6.1"/></svg>
<div class="a" style="left:121px;top:720px;width:766px;height:1px;background:#dfe3ea"></div>
<div class="t " style="left:132.00px;top:700.20px;font-size:18.6px;font-weight:400;color:#1f2937;letter-spacing:0.363px;">chain_t10</div>
<div class="a" style="left:890px;top:698.34px;width:18px;height:18px;border-radius:5px;background:#00731b"></div><svg style="left:890px;top:698.34px" width="18" height="18" viewBox="0 0 18 18" fill="none" stroke="#fff" stroke-width="1.15" stroke-linecap="round" stroke-linejoin="round"><path d="M4.3,9.9 L7.1,12.5 L13.4,6.1"/></svg>
<div class="a" style="left:914px;top:698.34px;width:18px;height:18px;border-radius:5px;background:#00731b"></div><svg style="left:914px;top:698.34px" width="18" height="18" viewBox="0 0 18 18" fill="none" stroke="#fff" stroke-width="1.15" stroke-linecap="round" stroke-linejoin="round"><path d="M4.3,9.9 L7.1,12.5 L13.4,6.1"/></svg>
<div class="a" style="left:938px;top:698.34px;width:18px;height:18px;border-radius:5px;background:#00731b"></div><svg style="left:938px;top:698.34px" width="18" height="18" viewBox="0 0 18 18" fill="none" stroke="#fff" stroke-width="1.15" stroke-linecap="round" stroke-linejoin="round"><path d="M4.3,9.9 L7.1,12.5 L13.4,6.1"/></svg>
<div class="a" style="left:962px;top:698.34px;width:18px;height:18px;border-radius:5px;background:#00731b"></div><svg style="left:962px;top:698.34px" width="18" height="18" viewBox="0 0 18 18" fill="none" stroke="#fff" stroke-width="1.15" stroke-linecap="round" stroke-linejoin="round"><path d="M4.3,9.9 L7.1,12.5 L13.4,6.1"/></svg>
<div class="a" style="left:986px;top:698.34px;width:18px;height:18px;border-radius:5px;background:#00731b"></div><svg style="left:986px;top:698.34px" width="18" height="18" viewBox="0 0 18 18" fill="none" stroke="#fff" stroke-width="1.15" stroke-linecap="round" stroke-linejoin="round"><path d="M4.3,9.9 L7.1,12.5 L13.4,6.1"/></svg>
<div class="a" style="left:121px;top:747px;width:766px;height:1px;background:#dfe3ea"></div>
<div class="t " style="left:132.00px;top:726.86px;font-size:18.6px;font-weight:400;color:#1f2937;letter-spacing:0.113px;">chain_t11</div>
<div class="a" style="left:890px;top:725.00px;width:18px;height:18px;border-radius:5px;background:#00731b"></div><svg style="left:890px;top:725.00px" width="18" height="18" viewBox="0 0 18 18" fill="none" stroke="#fff" stroke-width="1.15" stroke-linecap="round" stroke-linejoin="round"><path d="M4.3,9.9 L7.1,12.5 L13.4,6.1"/></svg>
<div class="a" style="left:914px;top:725.00px;width:18px;height:18px;border-radius:5px;background:#00731b"></div><svg style="left:914px;top:725.00px" width="18" height="18" viewBox="0 0 18 18" fill="none" stroke="#fff" stroke-width="1.15" stroke-linecap="round" stroke-linejoin="round"><path d="M4.3,9.9 L7.1,12.5 L13.4,6.1"/></svg>
<div class="a" style="left:938px;top:725.00px;width:18px;height:18px;border-radius:5px;background:#00731b"></div><svg style="left:938px;top:725.00px" width="18" height="18" viewBox="0 0 18 18" fill="none" stroke="#fff" stroke-width="1.15" stroke-linecap="round" stroke-linejoin="round"><path d="M4.3,9.9 L7.1,12.5 L13.4,6.1"/></svg>
<div class="a" style="left:962px;top:725.00px;width:18px;height:18px;border-radius:5px;background:#00731b"></div><svg style="left:962px;top:725.00px" width="18" height="18" viewBox="0 0 18 18" fill="none" stroke="#fff" stroke-width="1.15" stroke-linecap="round" stroke-linejoin="round"><path d="M4.3,9.9 L7.1,12.5 L13.4,6.1"/></svg>
<div class="a" style="left:986px;top:725.00px;width:18px;height:18px;border-radius:5px;background:#00731b"></div><svg style="left:986px;top:725.00px" width="18" height="18" viewBox="0 0 18 18" fill="none" stroke="#fff" stroke-width="1.15" stroke-linecap="round" stroke-linejoin="round"><path d="M4.3,9.9 L7.1,12.5 L13.4,6.1"/></svg>
<div class="a" style="left:121px;top:774px;width:766px;height:1px;background:#dfe3ea"></div>
<div class="t " style="left:132.00px;top:753.52px;font-size:18.6px;font-weight:400;color:#1f2937;letter-spacing:-0.2px;">empty_1</div>
<div class="a" style="left:890px;top:751.66px;width:18px;height:18px;border-radius:5px;background:#d42a26"></div><svg style="left:890px;top:751.66px" width="18" height="18" viewBox="0 0 18 18" fill="none" stroke="#fff" stroke-width="1.3" stroke-linecap="round"><path d="M5.6,5.6 L12.4,12.4 M12.4,5.6 L5.6,12.4"/></svg>
<div class="a" style="left:914px;top:751.66px;width:18px;height:18px;border-radius:5px;background:#00731b"></div><svg style="left:914px;top:751.66px" width="18" height="18" viewBox="0 0 18 18" fill="none" stroke="#fff" stroke-width="1.15" stroke-linecap="round" stroke-linejoin="round"><path d="M4.3,9.9 L7.1,12.5 L13.4,6.1"/></svg>
<div class="a" style="left:938px;top:751.66px;width:18px;height:18px;border-radius:5px;background:#00731b"></div><svg style="left:938px;top:751.66px" width="18" height="18" viewBox="0 0 18 18" fill="none" stroke="#fff" stroke-width="1.15" stroke-linecap="round" stroke-linejoin="round"><path d="M4.3,9.9 L7.1,12.5 L13.4,6.1"/></svg>
<div class="a" style="left:962px;top:751.66px;width:18px;height:18px;border-radius:5px;background:#d42a26"></div><svg style="left:962px;top:751.66px" width="18" height="18" viewBox="0 0 18 18" fill="none" stroke="#fff" stroke-width="1.3" stroke-linecap="round"><path d="M5.6,5.6 L12.4,12.4 M12.4,5.6 L5.6,12.4"/></svg>
<div class="a" style="left:986px;top:751.66px;width:18px;height:18px;border-radius:5px;background:#d42a26"></div><svg style="left:986px;top:751.66px" width="18" height="18" viewBox="0 0 18 18" fill="none" stroke="#fff" stroke-width="1.3" stroke-linecap="round"><path d="M5.6,5.6 L12.4,12.4 M12.4,5.6 L5.6,12.4"/></svg>
<div class="a" style="left:121px;top:800px;width:766px;height:1px;background:#dfe3ea"></div>
<div class="t " style="left:132.00px;top:780.18px;font-size:18.6px;font-weight:400;color:#1f2937;letter-spacing:0.313px;">end_chain_linear</div>
<div class="a" style="left:890px;top:778.32px;width:18px;height:18px;border-radius:5px;background:#00731b"></div><svg style="left:890px;top:778.32px" width="18" height="18" viewBox="0 0 18 18" fill="none" stroke="#fff" stroke-width="1.15" stroke-linecap="round" stroke-linejoin="round"><path d="M4.3,9.9 L7.1,12.5 L13.4,6.1"/></svg>
<div class="a" style="left:914px;top:778.32px;width:18px;height:18px;border-radius:5px;background:#00731b"></div><svg style="left:914px;top:778.32px" width="18" height="18" viewBox="0 0 18 18" fill="none" stroke="#fff" stroke-width="1.15" stroke-linecap="round" stroke-linejoin="round"><path d="M4.3,9.9 L7.1,12.5 L13.4,6.1"/></svg>
<div class="a" style="left:938px;top:778.32px;width:18px;height:18px;border-radius:5px;background:#00731b"></div><svg style="left:938px;top:778.32px" width="18" height="18" viewBox="0 0 18 18" fill="none" stroke="#fff" stroke-width="1.15" stroke-linecap="round" stroke-linejoin="round"><path d="M4.3,9.9 L7.1,12.5 L13.4,6.1"/></svg>
<div class="a" style="left:962px;top:778.32px;width:18px;height:18px;border-radius:5px;background:#00731b"></div><svg style="left:962px;top:778.32px" width="18" height="18" viewBox="0 0 18 18" fill="none" stroke="#fff" stroke-width="1.15" stroke-linecap="round" stroke-linejoin="round"><path d="M4.3,9.9 L7.1,12.5 L13.4,6.1"/></svg>
<div class="a" style="left:986px;top:778.32px;width:18px;height:18px;border-radius:5px;background:#00731b"></div><svg style="left:986px;top:778.32px" width="18" height="18" viewBox="0 0 18 18" fill="none" stroke="#fff" stroke-width="1.15" stroke-linecap="round" stroke-linejoin="round"><path d="M4.3,9.9 L7.1,12.5 L13.4,6.1"/></svg>
<div class="a" style="left:121px;top:800px;width:886px;height:28px;background:#c4d8f8"></div>
<div class="a" style="left:121px;top:827px;width:766px;height:1px;background:#dfe3ea"></div>
<div class="t " style="left:132.00px;top:806.84px;font-size:18.6px;font-weight:400;color:#1f2937;letter-spacing:0.312px;">chain_t12</div>
<div class="a" style="left:890px;top:804.98px;width:18px;height:18px;border-radius:5px;background:#c94c25"></div><svg style="left:890px;top:804.98px" width="18" height="18" viewBox="0 0 18 18" fill="none" stroke="#fff" stroke-width="1.05" stroke-linecap="round"><circle cx="9" cy="9" r="5.6" stroke-dasharray="13 1.7 2 1.7 2 1.7 2 1.7 2 1.7 2 1.7 1.6" transform="rotate(-88 9 9)"/><path d="M9,11.8 V6.6 M7.1,8.4 L9,6.5 L10.9,8.4" stroke-width="0.95"/></svg>
<div class="a" style="left:914px;top:804.98px;width:18px;height:18px;border-radius:5px;background:#00731b"></div><svg style="left:914px;top:804.98px" width="18" height="18" viewBox="0 0 18 18" fill="none" stroke="#fff" stroke-width="1.15" stroke-linecap="round" stroke-linejoin="round"><path d="M4.3,9.9 L7.1,12.5 L13.4,6.1"/></svg>
<div class="a" style="left:938px;top:804.98px;width:18px;height:18px;border-radius:5px;background:#00731b"></div><svg style="left:938px;top:804.98px" width="18" height="18" viewBox="0 0 18 18" fill="none" stroke="#fff" stroke-width="1.15" stroke-linecap="round" stroke-linejoin="round"><path d="M4.3,9.9 L7.1,12.5 L13.4,6.1"/></svg>
<div class="a" style="left:962px;top:804.98px;width:18px;height:18px;border-radius:5px;background:#c94c25"></div><svg style="left:962px;top:804.98px" width="18" height="18" viewBox="0 0 18 18" fill="none" stroke="#fff" stroke-width="1.05" stroke-linecap="round"><circle cx="9" cy="9" r="5.6" stroke-dasharray="13 1.7 2 1.7 2 1.7 2 1.7 2 1.7 2 1.7 1.6" transform="rotate(-88 9 9)"/><path d="M9,11.8 V6.6 M7.1,8.4 L9,6.5 L10.9,8.4" stroke-width="0.95"/></svg>
<div class="a" style="left:986px;top:804.98px;width:18px;height:18px;border-radius:5px;background:#c94c25"></div><svg style="left:986px;top:804.98px" width="18" height="18" viewBox="0 0 18 18" fill="none" stroke="#fff" stroke-width="1.05" stroke-linecap="round"><circle cx="9" cy="9" r="5.6" stroke-dasharray="13 1.7 2 1.7 2 1.7 2 1.7 2 1.7 2 1.7 1.6" transform="rotate(-88 9 9)"/><path d="M9,11.8 V6.6 M7.1,8.4 L9,6.5 L10.9,8.4" stroke-width="0.95"/></svg>
<div class="a" style="left:121px;top:854px;width:766px;height:1px;background:#dfe3ea"></div>
<div class="t " style="left:132.00px;top:833.50px;font-size:18.6px;font-weight:400;color:#1f2937;letter-spacing:0.36px;">chain_t13</div>
<div class="a" style="left:890px;top:831.64px;width:18px;height:18px;border-radius:5px;background:#c94c25"></div><svg style="left:890px;top:831.64px" width="18" height="18" viewBox="0 0 18 18" fill="none" stroke="#fff" stroke-width="1.05" stroke-linecap="round"><circle cx="9" cy="9" r="5.6" stroke-dasharray="13 1.7 2 1.7 2 1.7 2 1.7 2 1.7 2 1.7 1.6" transform="rotate(-88 9 9)"/><path d="M9,11.8 V6.6 M7.1,8.4 L9,6.5 L10.9,8.4" stroke-width="0.95"/></svg>
<div class="a" style="left:914px;top:831.64px;width:18px;height:18px;border-radius:5px;background:#00731b"></div><svg style="left:914px;top:831.64px" width="18" height="18" viewBox="0 0 18 18" fill="none" stroke="#fff" stroke-width="1.15" stroke-linecap="round" stroke-linejoin="round"><path d="M4.3,9.9 L7.1,12.5 L13.4,6.1"/></svg>
<div class="a" style="left:938px;top:831.64px;width:18px;height:18px;border-radius:5px;background:#00731b"></div><svg style="left:938px;top:831.64px" width="18" height="18" viewBox="0 0 18 18" fill="none" stroke="#fff" stroke-width="1.15" stroke-linecap="round" stroke-linejoin="round"><path d="M4.3,9.9 L7.1,12.5 L13.4,6.1"/></svg>
<div class="a" style="left:962px;top:831.64px;width:18px;height:18px;border-radius:5px;background:#c94c25"></div><svg style="left:962px;top:831.64px" width="18" height="18" viewBox="0 0 18 18" fill="none" stroke="#fff" stroke-width="1.05" stroke-linecap="round"><circle cx="9" cy="9" r="5.6" stroke-dasharray="13 1.7 2 1.7 2 1.7 2 1.7 2 1.7 2 1.7 1.6" transform="rotate(-88 9 9)"/><path d="M9,11.8 V6.6 M7.1,8.4 L9,6.5 L10.9,8.4" stroke-width="0.95"/></svg>
<div class="a" style="left:986px;top:831.64px;width:18px;height:18px;border-radius:5px;background:#c94c25"></div><svg style="left:986px;top:831.64px" width="18" height="18" viewBox="0 0 18 18" fill="none" stroke="#fff" stroke-width="1.05" stroke-linecap="round"><circle cx="9" cy="9" r="5.6" stroke-dasharray="13 1.7 2 1.7 2 1.7 2 1.7 2 1.7 2 1.7 1.6" transform="rotate(-88 9 9)"/><path d="M9,11.8 V6.6 M7.1,8.4 L9,6.5 L10.9,8.4" stroke-width="0.95"/></svg>
<div class="a" style="left:121px;top:880px;width:766px;height:1px;background:#dfe3ea"></div>
<div class="t " style="left:132.00px;top:860.16px;font-size:18.6px;font-weight:400;color:#1f2937;letter-spacing:0.36px;">chain_t14</div>
<div class="a" style="left:890px;top:858.30px;width:18px;height:18px;border-radius:5px;background:#c94c25"></div><svg style="left:890px;top:858.30px" width="18" height="18" viewBox="0 0 18 18" fill="none" stroke="#fff" stroke-width="1.05" stroke-linecap="round"><circle cx="9" cy="9" r="5.6" stroke-dasharray="13 1.7 2 1.7 2 1.7 2 1.7 2 1.7 2 1.7 1.6" transform="rotate(-88 9 9)"/><path d="M9,11.8 V6.6 M7.1,8.4 L9,6.5 L10.9,8.4" stroke-width="0.95"/></svg>
<div class="a" style="left:914px;top:858.30px;width:18px;height:18px;border-radius:5px;background:#00731b"></div><svg style="left:914px;top:858.30px" width="18" height="18" viewBox="0 0 18 18" fill="none" stroke="#fff" stroke-width="1.15" stroke-linecap="round" stroke-linejoin="round"><path d="M4.3,9.9 L7.1,12.5 L13.4,6.1"/></svg>
<div class="a" style="left:938px;top:858.30px;width:18px;height:18px;border-radius:5px;background:#00731b"></div><svg style="left:938px;top:858.30px" width="18" height="18" viewBox="0 0 18 18" fill="none" stroke="#fff" stroke-width="1.15" stroke-linecap="round" stroke-linejoin="round"><path d="M4.3,9.9 L7.1,12.5 L13.4,6.1"/></svg>
<div class="a" style="left:962px;top:858.30px;width:18px;height:18px;border-radius:5px;background:#c94c25"></div><svg style="left:962px;top:858.30px" width="18" height="18" viewBox="0 0 18 18" fill="none" stroke="#fff" stroke-width="1.05" stroke-linecap="round"><circle cx="9" cy="9" r="5.6" stroke-dasharray="13 1.7 2 1.7 2 1.7 2 1.7 2 1.7 2 1.7 1.6" transform="rotate(-88 9 9)"/><path d="M9,11.8 V6.6 M7.1,8.4 L9,6.5 L10.9,8.4" stroke-width="0.95"/></svg>
<div class="a" style="left:986px;top:858.30px;width:18px;height:18px;border-radius:5px;background:#c94c25"></div><svg style="left:986px;top:858.30px" width="18" height="18" viewBox="0 0 18 18" fill="none" stroke="#fff" stroke-width="1.05" stroke-linecap="round"><circle cx="9" cy="9" r="5.6" stroke-dasharray="13 1.7 2 1.7 2 1.7 2 1.7 2 1.7 2 1.7 1.6" transform="rotate(-88 9 9)"/><path d="M9,11.8 V6.6 M7.1,8.4 L9,6.5 L10.9,8.4" stroke-width="0.95"/></svg>
<div class="a" style="left:121px;top:907px;width:766px;height:1px;background:#dfe3ea"></div>
<div class="t " style="left:132.00px;top:886.82px;font-size:18.6px;font-weight:400;color:#1f2937;letter-spacing:0.36px;">chain_t15</div>
<div class="a" style="left:890px;top:884.96px;width:18px;height:18px;border-radius:5px;background:#c94c25"></div><svg style="left:890px;top:884.96px" width="18" height="18" viewBox="0 0 18 18" fill="none" stroke="#fff" stroke-width="1.05" stroke-linecap="round"><circle cx="9" cy="9" r="5.6" stroke-dasharray="13 1.7 2 1.7 2 1.7 2 1.7 2 1.7 2 1.7 1.6" transform="rotate(-88 9 9)"/><path d="M9,11.8 V6.6 M7.1,8.4 L9,6.5 L10.9,8.4" stroke-width="0.95"/></svg>
<div class="a" style="left:914px;top:884.96px;width:18px;height:18px;border-radius:5px;background:#00731b"></div><svg style="left:914px;top:884.96px" width="18" height="18" viewBox="0 0 18 18" fill="none" stroke="#fff" stroke-width="1.15" stroke-linecap="round" stroke-linejoin="round"><path d="M4.3,9.9 L7.1,12.5 L13.4,6.1"/></svg>
<div class="a" style="left:938px;top:884.96px;width:18px;height:18px;border-radius:5px;background:#00731b"></div><svg style="left:938px;top:884.96px" width="18" height="18" viewBox="0 0 18 18" fill="none" stroke="#fff" stroke-width="1.15" stroke-linecap="round" stroke-linejoin="round"><path d="M4.3,9.9 L7.1,12.5 L13.4,6.1"/></svg>
<div class="a" style="left:962px;top:884.96px;width:18px;height:18px;border-radius:5px;background:#c94c25"></div><svg style="left:962px;top:884.96px" width="18" height="18" viewBox="0 0 18 18" fill="none" stroke="#fff" stroke-width="1.05" stroke-linecap="round"><circle cx="9" cy="9" r="5.6" stroke-dasharray="13 1.7 2 1.7 2 1.7 2 1.7 2 1.7 2 1.7 1.6" transform="rotate(-88 9 9)"/><path d="M9,11.8 V6.6 M7.1,8.4 L9,6.5 L10.9,8.4" stroke-width="0.95"/></svg>
<div class="a" style="left:986px;top:884.96px;width:18px;height:18px;border-radius:5px;background:#c94c25"></div><svg style="left:986px;top:884.96px" width="18" height="18" viewBox="0 0 18 18" fill="none" stroke="#fff" stroke-width="1.05" stroke-linecap="round"><circle cx="9" cy="9" r="5.6" stroke-dasharray="13 1.7 2 1.7 2 1.7 2 1.7 2 1.7 2 1.7 1.6" transform="rotate(-88 9 9)"/><path d="M9,11.8 V6.6 M7.1,8.4 L9,6.5 L10.9,8.4" stroke-width="0.95"/></svg>
<div class="a" style="left:121px;top:934px;width:766px;height:1px;background:#dfe3ea"></div>
<div class="t " style="left:132.00px;top:913.48px;font-size:18.6px;font-weight:400;color:#1f2937;letter-spacing:0.36px;">chain_t16</div>
<div class="a" style="left:890px;top:911.62px;width:18px;height:18px;border-radius:5px;background:#c94c25"></div><svg style="left:890px;top:911.62px" width="18" height="18" viewBox="0 0 18 18" fill="none" stroke="#fff" stroke-width="1.05" stroke-linecap="round"><circle cx="9" cy="9" r="5.6" stroke-dasharray="13 1.7 2 1.7 2 1.7 2 1.7 2 1.7 2 1.7 1.6" transform="rotate(-88 9 9)"/><path d="M9,11.8 V6.6 M7.1,8.4 L9,6.5 L10.9,8.4" stroke-width="0.95"/></svg>
<div class="a" style="left:914px;top:911.62px;width:18px;height:18px;border-radius:5px;background:#00731b"></div><svg style="left:914px;top:911.62px" width="18" height="18" viewBox="0 0 18 18" fill="none" stroke="#fff" stroke-width="1.15" stroke-linecap="round" stroke-linejoin="round"><path d="M4.3,9.9 L7.1,12.5 L13.4,6.1"/></svg>
<div class="a" style="left:938px;top:911.62px;width:18px;height:18px;border-radius:5px;background:#00731b"></div><svg style="left:938px;top:911.62px" width="18" height="18" viewBox="0 0 18 18" fill="none" stroke="#fff" stroke-width="1.15" stroke-linecap="round" stroke-linejoin="round"><path d="M4.3,9.9 L7.1,12.5 L13.4,6.1"/></svg>
<div class="a" style="left:962px;top:911.62px;width:18px;height:18px;border-radius:5px;background:#c94c25"></div><svg style="left:962px;top:911.62px" width="18" height="18" viewBox="0 0 18 18" fill="none" stroke="#fff" stroke-width="1.05" stroke-linecap="round"><circle cx="9" cy="9" r="5.6" stroke-dasharray="13 1.7 2 1.7 2 1.7 2 1.7 2 1.7 2 1.7 1.6" transform="rotate(-88 9 9)"/><path d="M9,11.8 V6.6 M7.1,8.4 L9,6.5 L10.9,8.4" stroke-width="0.95"/></svg>
<div class="a" style="left:986px;top:911.62px;width:18px;height:18px;border-radius:5px;background:#c94c25"></div><svg style="left:986px;top:911.62px" width="18" height="18" viewBox="0 0 18 18" fill="none" stroke="#fff" stroke-width="1.05" stroke-linecap="round"><circle cx="9" cy="9" r="5.6" stroke-dasharray="13 1.7 2 1.7 2 1.7 2 1.7 2 1.7 2 1.7 1.6" transform="rotate(-88 9 9)"/><path d="M9,11.8 V6.6 M7.1,8.4 L9,6.5 L10.9,8.4" stroke-width="0.95"/></svg>
<div class="a" style="left:121px;top:960px;width:766px;height:1px;background:#dfe3ea"></div>
<div class="t " style="left:132.00px;top:940.14px;font-size:18.6px;font-weight:400;color:#1f2937;letter-spacing:0.213px;">chain_t17</div>
<div class="a" style="left:890px;top:938.28px;width:18px;height:18px;border-radius:5px;background:#c94c25"></div><svg style="left:890px;top:938.28px" width="18" height="18" viewBox="0 0 18 18" fill="none" stroke="#fff" stroke-width="1.05" stroke-linecap="round"><circle cx="9" cy="9" r="5.6" stroke-dasharray="13 1.7 2 1.7 2 1.7 2 1.7 2 1.7 2 1.7 1.6" transform="rotate(-88 9 9)"/><path d="M9,11.8 V6.6 M7.1,8.4 L9,6.5 L10.9,8.4" stroke-width="0.95"/></svg>
<div class="a" style="left:914px;top:938.28px;width:18px;height:18px;border-radius:5px;background:#00731b"></div><svg style="left:914px;top:938.28px" width="18" height="18" viewBox="0 0 18 18" fill="none" stroke="#fff" stroke-width="1.15" stroke-linecap="round" stroke-linejoin="round"><path d="M4.3,9.9 L7.1,12.5 L13.4,6.1"/></svg>
<div class="a" style="left:938px;top:938.28px;width:18px;height:18px;border-radius:5px;background:#00731b"></div><svg style="left:938px;top:938.28px" width="18" height="18" viewBox="0 0 18 18" fill="none" stroke="#fff" stroke-width="1.15" stroke-linecap="round" stroke-linejoin="round"><path d="M4.3,9.9 L7.1,12.5 L13.4,6.1"/></svg>
<div class="a" style="left:962px;top:938.28px;width:18px;height:18px;border-radius:5px;background:#c94c25"></div><svg style="left:962px;top:938.28px" width="18" height="18" viewBox="0 0 18 18" fill="none" stroke="#fff" stroke-width="1.05" stroke-linecap="round"><circle cx="9" cy="9" r="5.6" stroke-dasharray="13 1.7 2 1.7 2 1.7 2 1.7 2 1.7 2 1.7 1.6" transform="rotate(-88 9 9)"/><path d="M9,11.8 V6.6 M7.1,8.4 L9,6.5 L10.9,8.4" stroke-width="0.95"/></svg>
<div class="a" style="left:986px;top:938.28px;width:18px;height:18px;border-radius:5px;background:#c94c25"></div><svg style="left:986px;top:938.28px" width="18" height="18" viewBox="0 0 18 18" fill="none" stroke="#fff" stroke-width="1.05" stroke-linecap="round"><circle cx="9" cy="9" r="5.6" stroke-dasharray="13 1.7 2 1.7 2 1.7 2 1.7 2 1.7 2 1.7 1.6" transform="rotate(-88 9 9)"/><path d="M9,11.8 V6.6 M7.1,8.4 L9,6.5 L10.9,8.4" stroke-width="0.95"/></svg>
<div class="a" style="left:121px;top:987px;width:766px;height:1px;background:#dfe3ea"></div>
<div class="t " style="left:132.00px;top:966.80px;font-size:18.6px;font-weight:400;color:#1f2937;letter-spacing:0.533px;">empty_2</div>
<div class="a" style="left:890px;top:964.94px;width:18px;height:18px;border-radius:5px;background:#c94c25"></div><svg style="left:890px;top:964.94px" width="18" height="18" viewBox="0 0 18 18" fill="none" stroke="#fff" stroke-width="1.05" stroke-linecap="round"><circle cx="9" cy="9" r="5.6" stroke-dasharray="13 1.7 2 1.7 2 1.7 2 1.7 2 1.7 2 1.7 1.6" transform="rotate(-88 9 9)"/><path d="M9,11.8 V6.6 M7.1,8.4 L9,6.5 L10.9,8.4" stroke-width="0.95"/></svg>
<div class="a" style="left:914px;top:964.94px;width:18px;height:18px;border-radius:5px;background:#00731b"></div><svg style="left:914px;top:964.94px" width="18" height="18" viewBox="0 0 18 18" fill="none" stroke="#fff" stroke-width="1.15" stroke-linecap="round" stroke-linejoin="round"><path d="M4.3,9.9 L7.1,12.5 L13.4,6.1"/></svg>
<div class="a" style="left:938px;top:964.94px;width:18px;height:18px;border-radius:5px;background:#00731b"></div><svg style="left:938px;top:964.94px" width="18" height="18" viewBox="0 0 18 18" fill="none" stroke="#fff" stroke-width="1.15" stroke-linecap="round" stroke-linejoin="round"><path d="M4.3,9.9 L7.1,12.5 L13.4,6.1"/></svg>
<div class="a" style="left:962px;top:964.94px;width:18px;height:18px;border-radius:5px;background:#c94c25"></div><svg style="left:962px;top:964.94px" width="18" height="18" viewBox="0 0 18 18" fill="none" stroke="#fff" stroke-width="1.05" stroke-linecap="round"><circle cx="9" cy="9" r="5.6" stroke-dasharray="13 1.7 2 1.7 2 1.7 2 1.7 2 1.7 2 1.7 1.6" transform="rotate(-88 9 9)"/><path d="M9,11.8 V6.6 M7.1,8.4 L9,6.5 L10.9,8.4" stroke-width="0.95"/></svg>
<div class="a" style="left:986px;top:964.94px;width:18px;height:18px;border-radius:5px;background:#c94c25"></div><svg style="left:986px;top:964.94px" width="18" height="18" viewBox="0 0 18 18" fill="none" stroke="#fff" stroke-width="1.05" stroke-linecap="round"><circle cx="9" cy="9" r="5.6" stroke-dasharray="13 1.7 2 1.7 2 1.7 2 1.7 2 1.7 2 1.7 1.6" transform="rotate(-88 9 9)"/><path d="M9,11.8 V6.6 M7.1,8.4 L9,6.5 L10.9,8.4" stroke-width="0.95"/></svg>
<div class="a" style="left:121px;top:1014px;width:766px;height:1px;background:#dfe3ea"></div>
<div class="t " style="left:132.00px;top:993.46px;font-size:18.6px;font-weight:400;color:#1f2937;letter-spacing:0.36px;">chain_t18</div>
<div class="a" style="left:890px;top:991.60px;width:18px;height:18px;border-radius:5px;background:#c94c25"></div><svg style="left:890px;top:991.60px" width="18" height="18" viewBox="0 0 18 18" fill="none" stroke="#fff" stroke-width="1.05" stroke-linecap="round"><circle cx="9" cy="9" r="5.6" stroke-dasharray="13 1.7 2 1.7 2 1.7 2 1.7 2 1.7 2 1.7 1.6" transform="rotate(-88 9 9)"/><path d="M9,11.8 V6.6 M7.1,8.4 L9,6.5 L10.9,8.4" stroke-width="0.95"/></svg>
<div class="a" style="left:914px;top:991.60px;width:18px;height:18px;border-radius:5px;background:#00731b"></div><svg style="left:914px;top:991.60px" width="18" height="18" viewBox="0 0 18 18" fill="none" stroke="#fff" stroke-width="1.15" stroke-linecap="round" stroke-linejoin="round"><path d="M4.3,9.9 L7.1,12.5 L13.4,6.1"/></svg>
<div class="a" style="left:938px;top:991.60px;width:18px;height:18px;border-radius:5px;background:#00731b"></div><svg style="left:938px;top:991.60px" width="18" height="18" viewBox="0 0 18 18" fill="none" stroke="#fff" stroke-width="1.15" stroke-linecap="round" stroke-linejoin="round"><path d="M4.3,9.9 L7.1,12.5 L13.4,6.1"/></svg>
<div class="a" style="left:962px;top:991.60px;width:18px;height:18px;border-radius:5px;background:#c94c25"></div><svg style="left:962px;top:991.60px" width="18" height="18" viewBox="0 0 18 18" fill="none" stroke="#fff" stroke-width="1.05" stroke-linecap="round"><circle cx="9" cy="9" r="5.6" stroke-dasharray="13 1.7 2 1.7 2 1.7 2 1.7 2 1.7 2 1.7 1.6" transform="rotate(-88 9 9)"/><path d="M9,11.8 V6.6 M7.1,8.4 L9,6.5 L10.9,8.4" stroke-width="0.95"/></svg>
<div class="a" style="left:986px;top:991.60px;width:18px;height:18px;border-radius:5px;background:#c94c25"></div><svg style="left:986px;top:991.60px" width="18" height="18" viewBox="0 0 18 18" fill="none" stroke="#fff" stroke-width="1.05" stroke-linecap="round"><circle cx="9" cy="9" r="5.6" stroke-dasharray="13 1.7 2 1.7 2 1.7 2 1.7 2 1.7 2 1.7 1.6" transform="rotate(-88 9 9)"/><path d="M9,11.8 V6.6 M7.1,8.4 L9,6.5 L10.9,8.4" stroke-width="0.95"/></svg>
<div class="a" style="left:121px;top:1040px;width:766px;height:1px;background:#dfe3ea"></div>
<div class="t " style="left:132.00px;top:1020.12px;font-size:18.6px;font-weight:400;color:#1f2937;letter-spacing:0.36px;">chain_t19</div>
<div class="a" style="left:890px;top:1018.26px;width:18px;height:18px;border-radius:5px;background:#c94c25"></div><svg style="left:890px;top:1018.26px" width="18" height="18" viewBox="0 0 18 18" fill="none" stroke="#fff" stroke-width="1.05" stroke-linecap="round"><circle cx="9" cy="9" r="5.6" stroke-dasharray="13 1.7 2 1.7 2 1.7 2 1.7 2 1.7 2 1.7 1.6" transform="rotate(-88 9 9)"/><path d="M9,11.8 V6.6 M7.1,8.4 L9,6.5 L10.9,8.4" stroke-width="0.95"/></svg>
<div class="a" style="left:914px;top:1018.26px;width:18px;height:18px;border-radius:5px;background:#00731b"></div><svg style="left:914px;top:1018.26px" width="18" height="18" viewBox="0 0 18 18" fill="none" stroke="#fff" stroke-width="1.15" stroke-linecap="round" stroke-linejoin="round"><path d="M4.3,9.9 L7.1,12.5 L13.4,6.1"/></svg>
<div class="a" style="left:938px;top:1018.26px;width:18px;height:18px;border-radius:5px;background:#00731b"></div><svg style="left:938px;top:1018.26px" width="18" height="18" viewBox="0 0 18 18" fill="none" stroke="#fff" stroke-width="1.15" stroke-linecap="round" stroke-linejoin="round"><path d="M4.3,9.9 L7.1,12.5 L13.4,6.1"/></svg>
<div class="a" style="left:962px;top:1018.26px;width:18px;height:18px;border-radius:5px;background:#c94c25"></div><svg style="left:962px;top:1018.26px" width="18" height="18" viewBox="0 0 18 18" fill="none" stroke="#fff" stroke-width="1.05" stroke-linecap="round"><circle cx="9" cy="9" r="5.6" stroke-dasharray="13 1.7 2 1.7 2 1.7 2 1.7 2 1.7 2 1.7 1.6" transform="rotate(-88 9 9)"/><path d="M9,11.8 V6.6 M7.1,8.4 L9,6.5 L10.9,8.4" stroke-width="0.95"/></svg>
<div class="a" style="left:986px;top:1018.26px;width:18px;height:18px;border-radius:5px;background:#c94c25"></div><svg style="left:986px;top:1018.26px" width="18" height="18" viewBox="0 0 18 18" fill="none" stroke="#fff" stroke-width="1.05" stroke-linecap="round"><circle cx="9" cy="9" r="5.6" stroke-dasharray="13 1.7 2 1.7 2 1.7 2 1.7 2 1.7 2 1.7 1.6" transform="rotate(-88 9 9)"/><path d="M9,11.8 V6.6 M7.1,8.4 L9,6.5 L10.9,8.4" stroke-width="0.95"/></svg>
<div class="a" style="left:121px;top:1067px;width:766px;height:1px;background:#dfe3ea"></div>
<div class="t " style="left:132.00px;top:1046.78px;font-size:18.6px;font-weight:400;color:#1f2937;letter-spacing:0.425px;">end_chain</div>
<div class="a" style="left:890px;top:1044.92px;width:18px;height:18px;border-radius:5px;background:#c94c25"></div><svg style="left:890px;top:1044.92px" width="18" height="18" viewBox="0 0 18 18" fill="none" stroke="#fff" stroke-width="1.05" stroke-linecap="round"><circle cx="9" cy="9" r="5.6" stroke-dasharray="13 1.7 2 1.7 2 1.7 2 1.7 2 1.7 2 1.7 1.6" transform="rotate(-88 9 9)"/><path d="M9,11.8 V6.6 M7.1,8.4 L9,6.5 L10.9,8.4" stroke-width="0.95"/></svg>
<div class="a" style="left:914px;top:1044.92px;width:18px;height:18px;border-radius:5px;background:#00731b"></div><svg style="left:914px;top:1044.92px" width="18" height="18" viewBox="0 0 18 18" fill="none" stroke="#fff" stroke-width="1.15" stroke-linecap="round" stroke-linejoin="round"><path d="M4.3,9.9 L7.1,12.5 L13.4,6.1"/></svg>
<div class="a" style="left:938px;top:1044.92px;width:18px;height:18px;border-radius:5px;background:#00731b"></div><svg style="left:938px;top:1044.92px" width="18" height="18" viewBox="0 0 18 18" fill="none" stroke="#fff" stroke-width="1.15" stroke-linecap="round" stroke-linejoin="round"><path d="M4.3,9.9 L7.1,12.5 L13.4,6.1"/></svg>
<div class="a" style="left:962px;top:1044.92px;width:18px;height:18px;border-radius:5px;background:#c94c25"></div><svg style="left:962px;top:1044.92px" width="18" height="18" viewBox="0 0 18 18" fill="none" stroke="#fff" stroke-width="1.05" stroke-linecap="round"><circle cx="9" cy="9" r="5.6" stroke-dasharray="13 1.7 2 1.7 2 1.7 2 1.7 2 1.7 2 1.7 1.6" transform="rotate(-88 9 9)"/><path d="M9,11.8 V6.6 M7.1,8.4 L9,6.5 L10.9,8.4" stroke-width="0.95"/></svg>
<div class="a" style="left:986px;top:1044.92px;width:18px;height:18px;border-radius:5px;background:#c94c25"></div><svg style="left:986px;top:1044.92px" width="18" height="18" viewBox="0 0 18 18" fill="none" stroke="#fff" stroke-width="1.05" stroke-linecap="round"><circle cx="9" cy="9" r="5.6" stroke-dasharray="13 1.7 2 1.7 2 1.7 2 1.7 2 1.7 2 1.7 1.6" transform="rotate(-88 9 9)"/><path d="M9,11.8 V6.6 M7.1,8.4 L9,6.5 L10.9,8.4" stroke-width="0.95"/></svg>
<div class="a" style="left:1018px;top:81px;width:2px;height:1214px;background:#c9ced9"></div>
<div class="a" style="left:1021px;top:81px;width:1665px;height:149px;border:1.2px solid #cdd3dd;border-radius:9px;background:#fff"></div>
<svg style="left:1030px;top:104px" width="32" height="24" viewBox="0 0 32 24" fill="#151c2c" stroke="#151c2c"><path d="M2.5,12.3 H28.5" stroke-width="3.1"/><circle cx="15.5" cy="12.3" r="5.7" stroke="none"/></svg>
<div class="t " style="left:1070.20px;top:100.08px;font-size:24.6px;font-weight:400;color:#151c2c;letter-spacing:0.2px;-webkit-text-stroke:0.75px #151c2c">chain_t12</div>
<div class="t " style="left:1032.80px;top:149.29px;font-size:16.2px;font-weight:700;color:#485b7a;letter-spacing:0.15px;">Operator</div>
<div class="t " style="left:1032.80px;top:181.77px;font-size:21.3px;font-weight:400;color:#151c2c;letter-spacing:-0.5px;">@task</div>
<div class="t " style="left:2563.00px;top:149.59px;font-size:16.2px;font-weight:700;color:#485b7a;letter-spacing:0.05px;">Trigger Rule</div>
<div class="t " style="left:2563.00px;top:181.67px;font-size:21.3px;font-weight:400;color:#151c2c;letter-spacing:0.05px;">all_success</div>
<div class="t " style="left:1042.00px;top:252.78px;font-size:22px;font-weight:700;color:#3d5173;letter-spacing:-0.25px;">Overview</div>
<div class="t " style="left:1182.00px;top:252.78px;font-size:22px;font-weight:700;color:#111827;letter-spacing:-0.22px;">Task Instances</div>
<div class="t " style="left:1378.00px;top:252.78px;font-size:22px;font-weight:700;color:#3d5173;letter-spacing:-0.5px;">Audit Log</div>
<div class="a" style="left:1020px;top:288.8px;width:1666px;height:1.3px;background:#cfd5df"></div>
<div class="a" style="left:1160px;top:287px;width:196px;height:3.6px;background:#3b6cf3"></div>
<div class="a" style="left:1031px;top:306px;width:300px;height:53px;border:1px solid #d8dde7;border-radius:7px;background:#fff"></div>
<svg style="left:1044px;top:320px" width="24" height="24" viewBox="0 0 24 24" fill="none" stroke="#3f5373" stroke-width="1.9" stroke-linecap="round"><circle cx="11" cy="11" r="6.4"/><path d="M15.6,15.7 L19.4,19.6"/></svg>
<div class="t " style="left:1078.00px;top:323.17px;font-size:18.7px;font-weight:400;color:#5d6d85;letter-spacing:0px;">Search Tasks</div>
<div class="a" style="left:1274px;top:320.4px;width:42px;height:23.6px;border:1px solid #d3dbe8;border-radius:5px;background:#eef2f9"></div>
<div class="t " style="left:1279.00px;top:325.73px;font-size:14.5px;font-weight:400;color:#1c2d52;letter-spacing:-0.2px;">&#8984;+K</div>
<div class="a" style="left:1342px;top:306px;width:600px;height:53px;border:1px solid #d8dde7;border-radius:7px;background:#fff"></div>
<div class="t " style="left:1360.00px;top:323.17px;font-size:18.7px;font-weight:400;color:#151c2c;letter-spacing:0.2px;">All States</div>
<svg style="left:1905px;top:322px" width="20" height="20" viewBox="0 0 20 20" fill="none" stroke="#3d5173" stroke-width="2" stroke-linecap="round" stroke-linejoin="round"><path d="M4.6,7.4 L10.6,13.4 L16.6,7.4"/></svg>
<div class="t m" style="left:1069.00px;top:411.57px;font-size:18.7px;font-weight:400;color:#1a2233;letter-spacing:0.12px;">Dag Run</div>
<div class="t m" style="left:1257.00px;top:411.57px;font-size:18.7px;font-weight:400;color:#1a2233;letter-spacing:0.45000000000000007px;">Map Index</div>
<div class="t m" style="left:1462.60px;top:411.57px;font-size:18.7px;font-weight:400;color:#1a2233;letter-spacing:0.33999999999999997px;">State</div>
<div class="t m" style="left:1683.00px;top:411.57px;font-size:18.7px;font-weight:400;color:#1a2233;letter-spacing:0.53px;">Start Date</div>
<div class="t m" style="left:1886.00px;top:411.57px;font-size:18.7px;font-weight:400;color:#1a2233;letter-spacing:0.18999999999999997px;">End Date</div>
<div class="t m" style="left:2058.00px;top:411.57px;font-size:18.7px;font-weight:400;color:#1a2233;letter-spacing:0.42000000000000004px;">Try Number</div>
<div class="t m" style="left:2193.40px;top:411.57px;font-size:18.7px;font-weight:400;color:#1a2233;letter-spacing:0.13px;">Pool</div>
<div class="t m" style="left:2333.60px;top:411.57px;font-size:18.7px;font-weight:400;color:#1a2233;letter-spacing:0.51px;">Operator</div>
<div class="t m" style="left:2444.00px;top:411.57px;font-size:18.7px;font-weight:400;color:#1a2233;letter-spacing:0.6900000000000001px;">Duration</div>
<div class="t m" style="left:2556.20px;top:411.57px;font-size:18.7px;font-weight:400;color:#1a2233;letter-spacing:0.39px;">Dag Version</div>
<svg style="left:1160px;top:410px" width="15" height="21" viewBox="0 0 15 21" fill="#1e293b" stroke="#1e293b" stroke-width="1" stroke-linejoin="round"><path d="M7.5,0.8 L14.2,8.6 H0.8 Z"/><path d="M0.8,11.8 H14.2 L7.5,19.8 Z"/></svg>
<svg style="left:1365px;top:410px" width="15" height="21" viewBox="0 0 15 21" fill="#1e293b" stroke="#1e293b" stroke-width="1" stroke-linejoin="round"><path d="M7.5,0.8 L14.2,8.6 H0.8 Z"/><path d="M0.8,11.8 H14.2 L7.5,19.8 Z"/></svg>
<svg style="left:1525px;top:410px" width="15" height="21" viewBox="0 0 15 21" fill="#1e293b" stroke="#1e293b" stroke-width="1" stroke-linejoin="round"><path d="M7.5,0.8 L14.2,8.6 H0.8 Z"/><path d="M0.8,11.8 H14.2 L7.5,19.8 Z"/></svg>
<svg style="left:1789px;top:410px" width="15" height="21" viewBox="0 0 15 21" fill="#1e293b" stroke="#1e293b" stroke-width="1" stroke-linejoin="round"><path d="M7.5,0.8 L14.2,8.6 H0.8 Z"/><path d="M0.8,11.8 H14.2 L7.5,19.8 Z"/></svg>
<svg style="left:1982px;top:410px" width="15" height="21" viewBox="0 0 15 21" fill="#1e293b" stroke="#1e293b" stroke-width="1" stroke-linejoin="round"><path d="M7.5,0.8 L14.2,8.6 H0.8 Z"/><path d="M0.8,11.8 H14.2 L7.5,19.8 Z"/></svg>
<div class="a" style="left:1031px;top:468px;width:1655px;height:87px;background:#eef0f5;border-top:1px solid #dde1e9"></div>
<div class="t" style="left:1048.00px;top:490.19px;font-size:18.2px;font-weight:700;color:#2a5ee8;letter-spacing:0px;transform:scaleX(1.232);transform-origin:0 0;">2025-09-20</div>
<div class="t" style="left:1048.00px;top:517.09px;font-size:18.2px;font-weight:700;color:#2a5ee8;letter-spacing:0px;transform:scaleX(1.145);transform-origin:0 0;">01:23:21</div>
<div class="a" style="left:1440px;top:496.00px;width:188px;height:32px;background:#c94b25;border-radius:16px"></div>
<svg style="left:1449px;top:502.00px" width="20" height="20" viewBox="0 0 20 20" fill="none" stroke="#fff" stroke-width="1.4" stroke-linecap="round"><circle cx="10" cy="10" r="7.3" stroke-dasharray="17 2.2 2.6 2.2 2.6 2.2 2.6 2.2 2.6 2.2 2.6 2.2 2.4" transform="rotate(-88 10 10)"/><path d="M10,14 V6.8 M7.2,9.5 L10,6.6 L12.8,9.5"/></svg>
<div class="t m" style="left:1475.80px;top:502.29px;font-size:18.2px;font-weight:400;color:#fff;letter-spacing:0.53px;">Upstream Failed</div>
<div class="t" style="left:1661.40px;top:489.89px;font-size:18.2px;font-weight:400;color:#1a2233;letter-spacing:0px;transform:scaleX(1.155);transform-origin:0 0;">2025-09-20</div>
<div class="t" style="left:1661.40px;top:516.99px;font-size:18.2px;font-weight:400;color:#1a2233;letter-spacing:0px;transform:scaleX(1.105);transform-origin:0 0;">01:23:26</div>
<div class="t" style="left:1864.80px;top:489.89px;font-size:18.2px;font-weight:400;color:#1a2233;letter-spacing:0px;transform:scaleX(1.155);transform-origin:0 0;">2025-09-20</div>
<div class="t" style="left:1864.80px;top:516.99px;font-size:18.2px;font-weight:400;color:#1a2233;letter-spacing:0px;transform:scaleX(1.105);transform-origin:0 0;">01:23:26</div>
<div class="t " style="left:2058.00px;top:503.17px;font-size:18.7px;font-weight:400;color:#1a2233;letter-spacing:1px;">0</div>
<div class="t " style="left:2193.70px;top:503.17px;font-size:18.7px;font-weight:400;color:#1a2233;letter-spacing:0.49px;">default_pool</div>
<div class="t " style="left:2333.80px;top:503.17px;font-size:18.7px;font-weight:400;color:#1a2233;letter-spacing:-0.2px;">@task</div>
<div class="t " style="left:2445.00px;top:503.17px;font-size:18.7px;font-weight:400;color:#1a2233;letter-spacing:0.74px;">00:00:00</div>
<div class="t " style="left:2556.60px;top:503.17px;font-size:18.7px;font-weight:400;color:#1a2233;letter-spacing:0.2px;">v1</div>
<div class="a" style="left:1031px;top:555px;width:1655px;height:86px;border-top:1px solid #dde1e9"></div>
<div class="t" style="left:1048.00px;top:576.62px;font-size:18.2px;font-weight:700;color:#2a5ee8;letter-spacing:0px;transform:scaleX(1.232);transform-origin:0 0;">2025-09-20</div>
<div class="t" style="left:1048.00px;top:603.52px;font-size:18.2px;font-weight:700;color:#2a5ee8;letter-spacing:0px;transform:scaleX(1.145);transform-origin:0 0;">01:22:47</div>
<div class="a" style="left:1440px;top:582.43px;width:188px;height:32px;background:#c94b25;border-radius:16px"></div>
<svg style="left:1449px;top:588.43px" width="20" height="20" viewBox="0 0 20 20" fill="none" stroke="#fff" stroke-width="1.4" stroke-linecap="round"><circle cx="10" cy="10" r="7.3" stroke-dasharray="17 2.2 2.6 2.2 2.6 2.2 2.6 2.2 2.6 2.2 2.6 2.2 2.4" transform="rotate(-88 10 10)"/><path d="M10,14 V6.8 M7.2,9.5 L10,6.6 L12.8,9.5"/></svg>
<div class="t m" style="left:1475.80px;top:588.72px;font-size:18.2px;font-weight:400;color:#fff;letter-spacing:0.53px;">Upstream Failed</div>
<div class="t" style="left:1661.40px;top:576.32px;font-size:18.2px;font-weight:400;color:#1a2233;letter-spacing:0px;transform:scaleX(1.155);transform-origin:0 0;">2025-09-20</div>
<div class="t" style="left:1661.40px;top:603.42px;font-size:18.2px;font-weight:400;color:#1a2233;letter-spacing:0px;transform:scaleX(1.105);transform-origin:0 0;">01:22:52</div>
<div class="t" style="left:1864.80px;top:576.32px;font-size:18.2px;font-weight:400;color:#1a2233;letter-spacing:0px;transform:scaleX(1.155);transform-origin:0 0;">2025-09-20</div>
<div class="t" style="left:1864.80px;top:603.42px;font-size:18.2px;font-weight:400;color:#1a2233;letter-spacing:0px;transform:scaleX(1.105);transform-origin:0 0;">01:22:52</div>
<div class="t " style="left:2058.00px;top:589.60px;font-size:18.7px;font-weight:400;color:#1a2233;letter-spacing:1px;">0</div>
<div class="t " style="left:2193.70px;top:589.60px;font-size:18.7px;font-weight:400;color:#1a2233;letter-spacing:0.49px;">default_pool</div>
<div class="t " style="left:2333.80px;top:589.60px;font-size:18.7px;font-weight:400;color:#1a2233;letter-spacing:-0.2px;">@task</div>
<div class="t " style="left:2445.00px;top:589.60px;font-size:18.7px;font-weight:400;color:#1a2233;letter-spacing:0.74px;">00:00:00</div>
<div class="t " style="left:2556.60px;top:589.60px;font-size:18.7px;font-weight:400;color:#1a2233;letter-spacing:0.2px;">v1</div>
<div class="a" style="left:1031px;top:641px;width:1655px;height:87px;background:#eef0f5;border-top:1px solid #dde1e9"></div>
<div class="t" style="left:1048.00px;top:663.05px;font-size:18.2px;font-weight:700;color:#2a5ee8;letter-spacing:0px;transform:scaleX(1.232);transform-origin:0 0;">2025-09-20</div>
<div class="t" style="left:1048.00px;top:689.95px;font-size:18.2px;font-weight:700;color:#2a5ee8;letter-spacing:0px;transform:scaleX(1.145);transform-origin:0 0;">01:22:21</div>
<div class="a" style="left:1440px;top:668.86px;width:119.5px;height:32px;background:#01731a;border-radius:16px"></div>
<svg style="left:1449px;top:674.86px" width="20" height="20" viewBox="0 0 20 20" fill="none" stroke="#fff" stroke-width="1.7" stroke-linecap="round" stroke-linejoin="round"><path d="M3.6,9.4 L8.2,13.8 L16.8,4.9"/></svg>
<div class="t m" style="left:1475.80px;top:675.15px;font-size:18.2px;font-weight:400;color:#fff;letter-spacing:0.35px;">Success</div>
<div class="t" style="left:1661.40px;top:662.75px;font-size:18.2px;font-weight:400;color:#1a2233;letter-spacing:0px;transform:scaleX(1.155);transform-origin:0 0;">2025-09-20</div>
<div class="t" style="left:1661.40px;top:689.85px;font-size:18.2px;font-weight:400;color:#1a2233;letter-spacing:0px;transform:scaleX(1.105);transform-origin:0 0;">01:22:27</div>
<div class="t" style="left:1864.80px;top:662.75px;font-size:18.2px;font-weight:400;color:#1a2233;letter-spacing:0px;transform:scaleX(1.155);transform-origin:0 0;">2025-09-20</div>
<div class="t" style="left:1864.80px;top:689.85px;font-size:18.2px;font-weight:400;color:#1a2233;letter-spacing:0px;transform:scaleX(1.105);transform-origin:0 0;">01:22:27</div>
<div class="t " style="left:2058.00px;top:676.03px;font-size:18.7px;font-weight:400;color:#1a2233;letter-spacing:1px;">1</div>
<div class="t " style="left:2193.70px;top:676.03px;font-size:18.7px;font-weight:400;color:#1a2233;letter-spacing:0.49px;">default_pool</div>
<div class="t " style="left:2333.80px;top:676.03px;font-size:18.7px;font-weight:400;color:#1a2233;letter-spacing:-0.2px;">@task</div>
<div class="t " style="left:2445.00px;top:676.03px;font-size:18.7px;font-weight:400;color:#1a2233;letter-spacing:0.74px;">0.32s</div>
<div class="t " style="left:2556.60px;top:676.03px;font-size:18.7px;font-weight:400;color:#1a2233;letter-spacing:0.2px;">v1</div>
<div class="a" style="left:1031px;top:728px;width:1655px;height:86px;border-top:1px solid #dde1e9"></div>
<div class="t" style="left:1048.00px;top:749.48px;font-size:18.2px;font-weight:700;color:#2a5ee8;letter-spacing:0px;transform:scaleX(1.232);transform-origin:0 0;">2025-09-20</div>
<div class="t" style="left:1048.00px;top:776.38px;font-size:18.2px;font-weight:700;color:#2a5ee8;letter-spacing:0px;transform:scaleX(1.145);transform-origin:0 0;">01:21:30</div>
<div class="a" style="left:1440px;top:755.29px;width:119.5px;height:32px;background:#01731a;border-radius:16px"></div>
<svg style="left:1449px;top:761.29px" width="20" height="20" viewBox="0 0 20 20" fill="none" stroke="#fff" stroke-width="1.7" stroke-linecap="round" stroke-linejoin="round"><path d="M3.6,9.4 L8.2,13.8 L16.8,4.9"/></svg>
<div class="t m" style="left:1475.80px;top:761.58px;font-size:18.2px;font-weight:400;color:#fff;letter-spacing:0.35px;">Success</div>
<div class="t" style="left:1661.40px;top:749.18px;font-size:18.2px;font-weight:400;color:#1a2233;letter-spacing:0px;transform:scaleX(1.155);transform-origin:0 0;">2025-09-20</div>
<div class="t" style="left:1661.40px;top:776.28px;font-size:18.2px;font-weight:400;color:#1a2233;letter-spacing:0px;transform:scaleX(1.105);transform-origin:0 0;">01:21:35</div>
<div class="t" style="left:1864.80px;top:749.18px;font-size:18.2px;font-weight:400;color:#1a2233;letter-spacing:0px;transform:scaleX(1.155);transform-origin:0 0;">2025-09-20</div>
<div class="t" style="left:1864.80px;top:776.28px;font-size:18.2px;font-weight:400;color:#1a2233;letter-spacing:0px;transform:scaleX(1.105);transform-origin:0 0;">01:21:35</div>
<div class="t " style="left:2058.00px;top:762.46px;font-size:18.7px;font-weight:400;color:#1a2233;letter-spacing:1px;">1</div>
<div class="t " style="left:2193.70px;top:762.46px;font-size:18.7px;font-weight:400;color:#1a2233;letter-spacing:0.49px;">default_pool</div>
<div class="t " style="left:2333.80px;top:762.46px;font-size:18.7px;font-weight:400;color:#1a2233;letter-spacing:-0.2px;">@task</div>
<div class="t " style="left:2445.00px;top:762.46px;font-size:18.7px;font-weight:400;color:#1a2233;letter-spacing:0.74px;">0.18s</div>
<div class="t " style="left:2556.60px;top:762.46px;font-size:18.7px;font-weight:400;color:#1a2233;letter-spacing:0.2px;">v1</div>
<div class="a" style="left:1031px;top:814px;width:1655px;height:86px;background:#eef0f5;border-top:1px solid #dde1e9"></div>
<div class="t" style="left:1048.00px;top:835.91px;font-size:18.2px;font-weight:700;color:#2a5ee8;letter-spacing:0px;transform:scaleX(1.232);transform-origin:0 0;">2025-09-20</div>
<div class="t" style="left:1048.00px;top:862.81px;font-size:18.2px;font-weight:700;color:#2a5ee8;letter-spacing:0px;transform:scaleX(1.145);transform-origin:0 0;">01:21:16</div>
<div class="a" style="left:1440px;top:841.72px;width:188px;height:32px;background:#c94b25;border-radius:16px"></div>
<svg style="left:1449px;top:847.72px" width="20" height="20" viewBox="0 0 20 20" fill="none" stroke="#fff" stroke-width="1.4" stroke-linecap="round"><circle cx="10" cy="10" r="7.3" stroke-dasharray="17 2.2 2.6 2.2 2.6 2.2 2.6 2.2 2.6 2.2 2.6 2.2 2.4" transform="rotate(-88 10 10)"/><path d="M10,14 V6.8 M7.2,9.5 L10,6.6 L12.8,9.5"/></svg>
<div class="t m" style="left:1475.80px;top:848.01px;font-size:18.2px;font-weight:400;color:#fff;letter-spacing:0.53px;">Upstream Failed</div>
<div class="t" style="left:1661.40px;top:835.61px;font-size:18.2px;font-weight:400;color:#1a2233;letter-spacing:0px;transform:scaleX(1.155);transform-origin:0 0;">2025-09-20</div>
<div class="t" style="left:1661.40px;top:862.71px;font-size:18.2px;font-weight:400;color:#1a2233;letter-spacing:0px;transform:scaleX(1.105);transform-origin:0 0;">01:21:20</div>
<div class="t" style="left:1864.80px;top:835.61px;font-size:18.2px;font-weight:400;color:#1a2233;letter-spacing:0px;transform:scaleX(1.155);transform-origin:0 0;">2025-09-20</div>
<div class="t" style="left:1864.80px;top:862.71px;font-size:18.2px;font-weight:400;color:#1a2233;letter-spacing:0px;transform:scaleX(1.105);transform-origin:0 0;">01:21:20</div>
<div class="t " style="left:2058.00px;top:848.89px;font-size:18.7px;font-weight:400;color:#1a2233;letter-spacing:1px;">0</div>
<div class="t " style="left:2193.70px;top:848.89px;font-size:18.7px;font-weight:400;color:#1a2233;letter-spacing:0.49px;">default_pool</div>
<div class="t " style="left:2333.80px;top:848.89px;font-size:18.7px;font-weight:400;color:#1a2233;letter-spacing:-0.2px;">@task</div>
<div class="t " style="left:2445.00px;top:848.89px;font-size:18.7px;font-weight:400;color:#1a2233;letter-spacing:0.74px;">00:00:00</div>
<div class="t " style="left:2556.60px;top:848.89px;font-size:18.7px;font-weight:400;color:#1a2233;letter-spacing:0.2px;">v1</div>
<div class="a" style="left:1031px;top:900px;width:1655px;height:87px;border-top:1px solid #dde1e9"></div>
<div class="t" style="left:1048.00px;top:922.34px;font-size:18.2px;font-weight:700;color:#2a5ee8;letter-spacing:0px;transform:scaleX(1.232);transform-origin:0 0;">2025-09-20</div>
<div class="t" style="left:1048.00px;top:949.24px;font-size:18.2px;font-weight:700;color:#2a5ee8;letter-spacing:0px;transform:scaleX(1.145);transform-origin:0 0;">01:20:53</div>
<div class="a" style="left:1440px;top:928.15px;width:119.5px;height:32px;background:#01731a;border-radius:16px"></div>
<svg style="left:1449px;top:934.15px" width="20" height="20" viewBox="0 0 20 20" fill="none" stroke="#fff" stroke-width="1.7" stroke-linecap="round" stroke-linejoin="round"><path d="M3.6,9.4 L8.2,13.8 L16.8,4.9"/></svg>
<div class="t m" style="left:1475.80px;top:934.44px;font-size:18.2px;font-weight:400;color:#fff;letter-spacing:0.35px;">Success</div>
<div class="t" style="left:1661.40px;top:922.04px;font-size:18.2px;font-weight:400;color:#1a2233;letter-spacing:0px;transform:scaleX(1.155);transform-origin:0 0;">2025-09-20</div>
<div class="t" style="left:1661.40px;top:949.14px;font-size:18.2px;font-weight:400;color:#1a2233;letter-spacing:0px;transform:scaleX(1.105);transform-origin:0 0;">01:20:58</div>
<div class="t" style="left:1864.80px;top:922.04px;font-size:18.2px;font-weight:400;color:#1a2233;letter-spacing:0px;transform:scaleX(1.155);transform-origin:0 0;">2025-09-20</div>
<div class="t" style="left:1864.80px;top:949.14px;font-size:18.2px;font-weight:400;color:#1a2233;letter-spacing:0px;transform:scaleX(1.105);transform-origin:0 0;">01:20:58</div>
<div class="t " style="left:2058.00px;top:935.32px;font-size:18.7px;font-weight:400;color:#1a2233;letter-spacing:1px;">1</div>
<div class="t " style="left:2193.70px;top:935.32px;font-size:18.7px;font-weight:400;color:#1a2233;letter-spacing:0.49px;">default_pool</div>
<div class="t " style="left:2333.80px;top:935.32px;font-size:18.7px;font-weight:400;color:#1a2233;letter-spacing:-0.2px;">@task</div>
<div class="t " style="left:2445.00px;top:935.32px;font-size:18.7px;font-weight:400;color:#1a2233;letter-spacing:0.74px;">0.18s</div>
<div class="t " style="left:2556.60px;top:935.32px;font-size:18.7px;font-weight:400;color:#1a2233;letter-spacing:0.2px;">v1</div>
<div class="a" style="left:1031px;top:987px;width:1655px;height:86px;background:#eef0f5;border-top:1px solid #dde1e9"></div>
<div class="t" style="left:1048.00px;top:1008.77px;font-size:18.2px;font-weight:700;color:#2a5ee8;letter-spacing:0px;transform:scaleX(1.232);transform-origin:0 0;">2025-09-20</div>
<div class="t" style="left:1048.00px;top:1035.67px;font-size:18.2px;font-weight:700;color:#2a5ee8;letter-spacing:0px;transform:scaleX(1.145);transform-origin:0 0;">01:20:32</div>
<div class="a" style="left:1440px;top:1014.58px;width:119.5px;height:32px;background:#01731a;border-radius:16px"></div>
<svg style="left:1449px;top:1020.58px" width="20" height="20" viewBox="0 0 20 20" fill="none" stroke="#fff" stroke-width="1.7" stroke-linecap="round" stroke-linejoin="round"><path d="M3.6,9.4 L8.2,13.8 L16.8,4.9"/></svg>
<div class="t m" style="left:1475.80px;top:1020.87px;font-size:18.2px;font-weight:400;color:#fff;letter-spacing:0.35px;">Success</div>
<div class="t" style="left:1661.40px;top:1008.47px;font-size:18.2px;font-weight:400;color:#1a2233;letter-spacing:0px;transform:scaleX(1.155);transform-origin:0 0;">2025-09-20</div>
<div class="t" style="left:1661.40px;top:1035.57px;font-size:18.2px;font-weight:400;color:#1a2233;letter-spacing:0px;transform:scaleX(1.105);transform-origin:0 0;">01:20:38</div>
<div class="t" style="left:1864.80px;top:1008.47px;font-size:18.2px;font-weight:400;color:#1a2233;letter-spacing:0px;transform:scaleX(1.155);transform-origin:0 0;">2025-09-20</div>
<div class="t" style="left:1864.80px;top:1035.57px;font-size:18.2px;font-weight:400;color:#1a2233;letter-spacing:0px;transform:scaleX(1.105);transform-origin:0 0;">01:20:39</div>
<div class="t " style="left:2058.00px;top:1021.75px;font-size:18.7px;font-weight:400;color:#1a2233;letter-spacing:1px;">1</div>
<div class="t " style="left:2193.70px;top:1021.75px;font-size:18.7px;font-weight:400;color:#1a2233;letter-spacing:0.49px;">default_pool</div>
<div class="t " style="left:2333.80px;top:1021.75px;font-size:18.7px;font-weight:400;color:#1a2233;letter-spacing:-0.2px;">@task</div>
<div class="t " style="left:2445.00px;top:1021.75px;font-size:18.7px;font-weight:400;color:#1a2233;letter-spacing:0.74px;">0.17s</div>
<div class="t " style="left:2556.60px;top:1021.75px;font-size:18.7px;font-weight:400;color:#1a2233;letter-spacing:0.2px;">v1</div>
<div class="a" style="left:1031px;top:1073px;width:1655px;height:1px;background:#dde1e9"></div>
<div class="a" style="left:1020px;top:689px;width:26px;height:32px;background:#a4aebc;border-radius:0 16px 16px 0;box-shadow:2px 3px 6px rgba(0,0,0,0.08)"></div>
<svg style="left:1020px;top:689px" width="26" height="32" viewBox="0 0 26 32" fill="none" stroke="#fff" stroke-width="2.7" stroke-linecap="square"><path d="M6,8.8 L12.5,15.6 L6,22.4"/></svg>
<div class="a" style="left:105px;top:1215px;width:2581px;height:95px;background:radial-gradient(ellipse 3000px 95px at 500px 95px, rgba(0,0,0,0.09) 0%, rgba(0,0,0,0.035) 45%, rgba(0,0,0,0) 100%)"></div>
<div class="a" style="left:0px;top:1215px;width:105px;height:95px;background:radial-gradient(ellipse 300px 95px at 200px 95px, rgba(0,0,0,0.025) 0%, rgba(0,0,0,0.008) 50%, rgba(0,0,0,0) 100%)"></div>
<div class="a" style="left:1020px;top:1267px;width:1666px;height:28px;background:#f1f1f1;border-top:1px solid #e0e0e0;border-bottom:1px solid #e0e0e0"></div>
<div class="a" style="left:1026px;top:1274px;width:1493px;height:16px;background:#b8b8b8;border-radius:8px"></div>
<div class="a" style="left:0px;top:1298px;width:12px;height:12px;background:radial-gradient(circle at 12px 0px, rgba(0,0,0,0) 11.5px, #000 12.5px)"></div>
<div class="a" style="left:2686px;top:1298px;width:12px;height:12px;background:radial-gradient(circle at 0px 0px, rgba(0,0,0,0) 11.5px, #000 12.5px)"></div>
</body></html>
